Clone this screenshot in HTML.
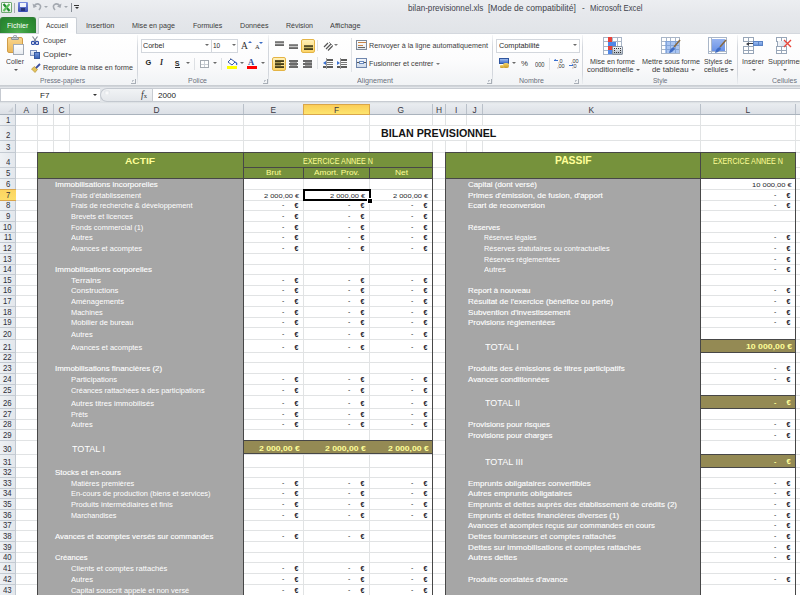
<!DOCTYPE html><html><head><meta charset="utf-8"><title>bilan-previsionnel.xls - Microsoft Excel</title><style>
html,body{margin:0;padding:0;width:800px;height:595px;overflow:hidden;background:#fff;}
body{position:relative;font-family:"Liberation Sans",sans-serif;}
body>div{position:absolute;white-space:nowrap;}svg{display:block;}
</style></head><body>
<div style="left:0px;top:0px;width:800px;height:33px;background:linear-gradient(#eceef1 0px,#e6e8ec 14px,#e1e4e8 33px);"></div>
<div style="left:1px;top:2px;width:11px;height:11px;background:linear-gradient(#ffffff,#dcebdc);border:1px solid #6fa872;box-sizing:border-box;border-radius:1px;"></div>
<div style="left:2px;top:3px;width:9px;height:9px;"><svg width="9" height="9" viewBox="0 0 9 9"><path d="M1.5 1 L7.5 8" stroke="#1f8a2e" stroke-width="2.2"/><path d="M7.5 1 L1.5 8" stroke="#5cc05c" stroke-width="2"/></svg></div>
<div style="left:14px;top:3px;width:1px;height:10px;background:#a8adb4;"></div>
<div style="left:18px;top:2px;width:10px;height:10px;background:linear-gradient(#7b8ee0,#3a4cb0);border-radius:1px;"></div>
<div style="left:20px;top:3px;width:6px;height:4px;background:#f0f3fb;"></div>
<div style="left:21px;top:8px;width:4px;height:3px;background:#28347a;"></div>
<div style="left:32px;top:2px;width:10px;height:10px;"><svg width="10" height="10" viewBox="0 0 10 10"><path d="M2 4 Q5 0.5 8 3 Q9.5 5 7 8" stroke="#a4a9b0" stroke-width="1.6" fill="none"/><path d="M0.5 1.5 L1.5 6 L5 4.5 Z" fill="#a4a9b0"/></svg></div>
<div style="left:44.0px;top:6px;width:0;height:0;border-left:2px solid transparent;border-right:2px solid transparent;border-top:2.5px solid #a4a9b0;"></div>
<div style="left:52px;top:2px;width:10px;height:10px;"><svg width="10" height="10" viewBox="0 0 10 10"><path d="M8 4 Q5 0.5 2 3 Q0.5 5 3 8" stroke="#a4a9b0" stroke-width="1.6" fill="none"/><path d="M9.5 1.5 L8.5 6 L5 4.5 Z" fill="#a4a9b0"/></svg></div>
<div style="left:64.0px;top:6px;width:0;height:0;border-left:2px solid transparent;border-right:2px solid transparent;border-top:2.5px solid #a4a9b0;"></div>
<div style="left:71px;top:3px;width:1px;height:9px;background:#8a9098;"></div>
<div style="left:74px;top:5px;width:5px;height:1px;background:#333;"></div>
<div style="left:74.5px;top:7px;width:0;height:0;border-left:2px solid transparent;border-right:2px solid transparent;border-top:2.5px solid #333;"></div>
<div style="left:407.5px;top:-0.84px;height:20px;font:8.2px 'Liberation Sans',sans-serif;line-height:20px;color:#3f434c;transform:scaleX(0.9919);transform-origin:0 0;">bilan-previsionnel.xls</div>
<div style="left:488px;top:-0.84px;height:20px;font:8.2px 'Liberation Sans',sans-serif;line-height:20px;color:#3f434c;transform:scaleX(1.0436);transform-origin:0 0;">[Mode de compatibilité]</div>
<div style="left:582px;top:-0.84px;height:20px;font:8.2px 'Liberation Sans',sans-serif;line-height:20px;color:#3f434c;">-</div>
<div style="left:590px;top:-0.84px;height:20px;font:8.2px 'Liberation Sans',sans-serif;line-height:20px;color:#3f434c;transform:scaleX(0.9444);transform-origin:0 0;">Microsoft Excel</div>
<div style="left:0px;top:17px;width:36px;height:16px;background:radial-gradient(ellipse at 50% 100%,#4fae4f 0%,#2f8f36 60%,#257f2c 100%);border-radius:3px 3px 0 0;border:1px solid #2f7f35;border-bottom:none;box-sizing:border-box;"></div>
<div style="left:7px;top:15.51px;height:20px;font:7.2px 'Liberation Sans',sans-serif;line-height:20px;color:#ffffff;transform:scaleX(0.9952);transform-origin:0 0;">Fichier</div>
<div style="left:38px;top:17px;width:39px;height:17px;background:linear-gradient(#ffffff,#fdfdfe);border:1px solid #c9ced5;border-bottom:none;border-radius:2px 2px 0 0;box-sizing:border-box;"></div>
<div style="left:46px;top:15.51px;height:20px;font:7.2px 'Liberation Sans',sans-serif;line-height:20px;color:#3c3c3c;transform:scaleX(0.9478);transform-origin:0 0;">Accueil</div>
<div style="left:85.5px;top:15.54px;height:20px;font:7.1px 'Liberation Sans',sans-serif;line-height:20px;color:#3c3c3c;transform:scaleX(1.0465);transform-origin:0 0;">Insertion</div>
<div style="left:132px;top:15.54px;height:20px;font:7.1px 'Liberation Sans',sans-serif;line-height:20px;color:#3c3c3c;transform:scaleX(1.0087);transform-origin:0 0;">Mise en page</div>
<div style="left:192.5px;top:15.54px;height:20px;font:7.1px 'Liberation Sans',sans-serif;line-height:20px;color:#3c3c3c;transform:scaleX(0.9885);transform-origin:0 0;">Formules</div>
<div style="left:239.5px;top:15.54px;height:20px;font:7.1px 'Liberation Sans',sans-serif;line-height:20px;color:#3c3c3c;transform:scaleX(1.0028);transform-origin:0 0;">Données</div>
<div style="left:285.5px;top:15.54px;height:20px;font:7.1px 'Liberation Sans',sans-serif;line-height:20px;color:#3c3c3c;transform:scaleX(0.9916);transform-origin:0 0;">Révision</div>
<div style="left:330px;top:15.54px;height:20px;font:7.1px 'Liberation Sans',sans-serif;line-height:20px;color:#3c3c3c;transform:scaleX(1.0348);transform-origin:0 0;">Affichage</div>
<div style="left:0px;top:33px;width:800px;height:52px;background:linear-gradient(#ffffff 0%,#fcfcfd 50%,#f1f3f5 100%);border-top:1px solid #d4d8de;box-sizing:border-box;"></div>
<div style="left:39px;top:33px;width:37px;height:1px;background:#fff;"></div>
<div style="left:137px;top:35px;width:1px;height:49px;background:linear-gradient(rgba(205,210,216,0.2),#d3d7dd 25%,#d3d7dd 80%,rgba(205,210,216,0.2));"></div>
<div style="left:268px;top:35px;width:1px;height:49px;background:linear-gradient(rgba(205,210,216,0.2),#d3d7dd 25%,#d3d7dd 80%,rgba(205,210,216,0.2));"></div>
<div style="left:492px;top:35px;width:1px;height:49px;background:linear-gradient(rgba(205,210,216,0.2),#d3d7dd 25%,#d3d7dd 80%,rgba(205,210,216,0.2));"></div>
<div style="left:582px;top:35px;width:1px;height:49px;background:linear-gradient(rgba(205,210,216,0.2),#d3d7dd 25%,#d3d7dd 80%,rgba(205,210,216,0.2));"></div>
<div style="left:737px;top:35px;width:1px;height:49px;background:linear-gradient(rgba(205,210,216,0.2),#d3d7dd 25%,#d3d7dd 80%,rgba(205,210,216,0.2));"></div>
<div style="left:40px;top:70.57px;height:20px;font:7.0px 'Liberation Sans',sans-serif;line-height:20px;color:#6b707c;transform:scaleX(0.9559);transform-origin:0 0;">Presse-papiers</div>
<div style="left:188px;top:70.57px;height:20px;font:7.0px 'Liberation Sans',sans-serif;line-height:20px;color:#6b707c;transform:scaleX(0.9965);transform-origin:0 0;">Police</div>
<div style="left:357px;top:70.57px;height:20px;font:7.0px 'Liberation Sans',sans-serif;line-height:20px;color:#6b707c;transform:scaleX(1.0279);transform-origin:0 0;">Alignement</div>
<div style="left:519px;top:70.57px;height:20px;font:7.0px 'Liberation Sans',sans-serif;line-height:20px;color:#6b707c;transform:scaleX(1.0041);transform-origin:0 0;">Nombre</div>
<div style="left:652.5px;top:70.57px;height:20px;font:7.0px 'Liberation Sans',sans-serif;line-height:20px;color:#6b707c;transform:scaleX(0.9317);transform-origin:0 0;">Style</div>
<div style="left:772px;top:70.57px;height:20px;font:7.0px 'Liberation Sans',sans-serif;line-height:20px;color:#6b707c;transform:scaleX(1.0040);transform-origin:0 0;">Cellules</div>
<div style="left:131px;top:79px;width:5px;height:5px;border-right:1px solid #a8aeb6;border-bottom:1px solid #a8aeb6;box-sizing:border-box;"></div>
<div style="left:132px;top:80px;width:2px;height:2px;border-left:1px solid #c0c5cc;border-top:1px solid #c0c5cc;box-sizing:border-box;"></div>
<div style="left:263px;top:79px;width:5px;height:5px;border-right:1px solid #a8aeb6;border-bottom:1px solid #a8aeb6;box-sizing:border-box;"></div>
<div style="left:264px;top:80px;width:2px;height:2px;border-left:1px solid #c0c5cc;border-top:1px solid #c0c5cc;box-sizing:border-box;"></div>
<div style="left:487px;top:79px;width:5px;height:5px;border-right:1px solid #a8aeb6;border-bottom:1px solid #a8aeb6;box-sizing:border-box;"></div>
<div style="left:488px;top:80px;width:2px;height:2px;border-left:1px solid #c0c5cc;border-top:1px solid #c0c5cc;box-sizing:border-box;"></div>
<div style="left:574px;top:79px;width:5px;height:5px;border-right:1px solid #a8aeb6;border-bottom:1px solid #a8aeb6;box-sizing:border-box;"></div>
<div style="left:575px;top:80px;width:2px;height:2px;border-left:1px solid #c0c5cc;border-top:1px solid #c0c5cc;box-sizing:border-box;"></div>
<div style="left:7px;top:37px;width:16px;height:16px;background:linear-gradient(#f8d58f,#ecb858);border:1px solid #cf9c48;border-radius:2px;box-sizing:border-box;"></div>
<div style="left:11px;top:37px;width:8px;height:3px;background:linear-gradient(#e6e9ed,#9aa1a9);border:1px solid #8a9199;box-sizing:border-box;border-radius:1px;"></div>
<div style="left:13px;top:35px;width:4px;height:3px;border:1px solid #9aa1a9;border-bottom:none;border-radius:2px 2px 0 0;box-sizing:border-box;"></div>
<div style="left:13px;top:44px;width:11px;height:11px;background:linear-gradient(#ffffff,#e7ebf0);border:1px solid #a3abb6;box-sizing:border-box;"></div>
<div style="left:6px;top:51.84px;height:20px;font:7.1px 'Liberation Sans',sans-serif;line-height:20px;color:#3c3c3c;transform:scaleX(0.9706);transform-origin:0 0;">Coller</div>
<div style="left:13.5px;top:69px;width:0;height:0;border-left:2px solid transparent;border-right:2px solid transparent;border-top:2.5px solid #5a5a5a;"></div>
<div style="left:31px;top:36px;width:8px;height:9px;"><svg width="8" height="9" viewBox="0 0 8 9"><path d="M1.5 0.5 L5.5 6" stroke="#7d8590" stroke-width="1.1"/><path d="M6.5 0.5 L2.5 6" stroke="#7d8590" stroke-width="1.1"/><circle cx="2" cy="7" r="1.6" fill="none" stroke="#2f4fa8" stroke-width="1.2"/><circle cx="6" cy="7" r="1.6" fill="none" stroke="#2f4fa8" stroke-width="1.2"/></svg></div>
<div style="left:43px;top:30.54px;height:20px;font:7.1px 'Liberation Sans',sans-serif;line-height:20px;color:#3c3c3c;transform:scaleX(0.9877);transform-origin:0 0;">Couper</div>
<div style="left:30px;top:50px;width:7px;height:6px;background:linear-gradient(#eef2f8,#c9d5ea);border:1px solid #7d93bf;box-sizing:border-box;"></div>
<div style="left:34px;top:52px;width:6px;height:7px;background:linear-gradient(#6f93d8,#3b64b8);border:1px solid #35589e;box-sizing:border-box;"></div>
<div style="left:43px;top:45.04px;height:20px;font:7.1px 'Liberation Sans',sans-serif;line-height:20px;color:#3c3c3c;transform:scaleX(1.1952);transform-origin:0 0;">Copier</div>
<div style="left:67.5px;top:53.5px;width:0;height:0;border-left:2px solid transparent;border-right:2px solid transparent;border-top:2.5px solid #6a6a6a;"></div>
<div style="left:31px;top:63px;width:10px;height:10px;"><svg width="10" height="10" viewBox="0 0 10 10"><path d="M0.5 6 L4 9.5 L6.5 6.5 L3.5 3.5 Z" fill="#e3c35c" stroke="#b08a2a" stroke-width="0.6"/><path d="M5 5 L9 1" stroke="#3c4fa0" stroke-width="1.8"/></svg></div>
<div style="left:43px;top:57.84px;height:20px;font:7.1px 'Liberation Sans',sans-serif;line-height:20px;color:#3c3c3c;transform:scaleX(1.0047);transform-origin:0 0;">Reproduire la mise en forme</div>
<div style="left:141px;top:39px;width:71px;height:14px;background:#fff;border:1px solid #d3d7dd;box-sizing:border-box;"></div>
<div style="left:211px;top:39px;width:27px;height:14px;background:#fff;border:1px solid #d3d7dd;box-sizing:border-box;"></div>
<div style="left:143.3px;top:36.47px;height:20px;font:7.3px 'Liberation Sans',sans-serif;line-height:20px;color:#2a2a2a;transform:scaleX(0.9765);transform-origin:0 0;">Corbel</div>
<div style="left:204.5px;top:44px;width:0;height:0;border-left:2px solid transparent;border-right:2px solid transparent;border-top:2.5px solid #6a6a6a;"></div>
<div style="left:212.8px;top:36.47px;height:20px;font:7.3px 'Liberation Sans',sans-serif;line-height:20px;color:#2a2a2a;transform:scaleX(0.8867);transform-origin:0 0;">10</div>
<div style="left:231.5px;top:44px;width:0;height:0;border-left:2px solid transparent;border-right:2px solid transparent;border-top:2.5px solid #6a6a6a;"></div>
<div style="left:241px;top:36.21px;height:20px;font:9.5px 'Liberation Serif',serif;line-height:20px;color:#2d2d2d;">A</div>
<div style="left:248px;top:41px;width:0;height:0;border-left:2px solid transparent;border-right:2px solid transparent;border-bottom:2px solid #3a6cc4;"></div>
<div style="left:255px;top:37.25px;height:20px;font:6.5px 'Liberation Serif',serif;line-height:20px;color:#2d2d2d;">A</div>
<div style="left:259px;top:42px;width:0;height:0;border-left:2.5px solid transparent;border-right:2.5px solid transparent;border-top:2px solid #3a6cc4;"></div>
<div style="left:145.5px;top:53.44px;height:20px;font:bold 7.4px 'Liberation Sans',sans-serif;line-height:20px;color:#1c1c1c;">G</div>
<div style="left:160px;top:53.30px;height:20px;font:italic bold 7.8px 'Liberation Serif',serif;line-height:20px;color:#2a2a2a;">I</div>
<div style="left:174.8px;top:53.51px;height:20px;font:bold 7.2px 'Liberation Sans',sans-serif;line-height:20px;color:#2a2a2a;">S</div>
<div style="left:175px;top:67px;width:5px;height:1px;background:#2a2a2a;"></div>
<div style="left:185.5px;top:62px;width:0;height:0;border-left:2px solid transparent;border-right:2px solid transparent;border-top:2.5px solid #6a6a6a;"></div>
<div style="left:194px;top:58px;width:1px;height:12px;background:#dde0e4;"></div>
<div style="left:200px;top:60px;width:9px;height:8px;border:1px solid #a3a9b0;box-sizing:border-box;background:linear-gradient(#c9ced4,#c9ced4) 50% 0/1px 100% no-repeat,linear-gradient(#c9ced4,#c9ced4) 0 50%/100% 1px no-repeat,#fff;"></div>
<div style="left:212.5px;top:62px;width:0;height:0;border-left:2px solid transparent;border-right:2px solid transparent;border-top:2.5px solid #6a6a6a;"></div>
<div style="left:221px;top:58px;width:1px;height:12px;background:#dde0e4;"></div>
<div style="left:227px;top:58px;width:11px;height:8px;"><svg width="11" height="8" viewBox="0 0 11 8"><path d="M1 4 L4 1 L8 4 L5 7 Z" fill="#fff" stroke="#3d5ca8" stroke-width="1"/><path d="M8 4 Q10.5 5 9.5 7" stroke="#2f5fc8" stroke-width="1.2" fill="none"/><path d="M3.5 0.5 L2.5 -1" stroke="#555" stroke-width="1"/></svg></div>
<div style="left:227px;top:66px;width:10px;height:3px;background:#ffff00;"></div>
<div style="left:239.5px;top:62px;width:0;height:0;border-left:2px solid transparent;border-right:2px solid transparent;border-top:2.5px solid #6a6a6a;"></div>
<div style="left:248px;top:52.35px;height:20px;font:bold 8.5px 'Liberation Serif',serif;line-height:20px;color:#2f4e96;">A</div>
<div style="left:247px;top:66px;width:10px;height:3px;background:#ff0000;"></div>
<div style="left:260.5px;top:62px;width:0;height:0;border-left:2px solid transparent;border-right:2px solid transparent;border-top:2.5px solid #6a6a6a;"></div>
<div style="left:275px;top:41px;width:9px;height:2px;background:linear-gradient(#9a9a9a,#6a6a6a);"></div>
<div style="left:275px;top:43px;width:9px;height:1px;background:#c8c8c8;"></div>
<div style="left:275px;top:44px;width:9px;height:2px;background:linear-gradient(#8a8a8a,#5a5a5a);"></div>
<div style="left:289px;top:44px;width:9px;height:2px;background:linear-gradient(#9a9a9a,#6a6a6a);"></div>
<div style="left:289px;top:46px;width:9px;height:1px;background:#c8c8c8;"></div>
<div style="left:289px;top:47px;width:9px;height:2px;background:linear-gradient(#8a8a8a,#5a5a5a);"></div>
<div style="left:301px;top:39px;width:14px;height:14px;background:linear-gradient(#fff0b8,#fbd46a);border:1px solid #e4b445;border-radius:2px;box-sizing:border-box;"></div>
<div style="left:304px;top:45px;width:9px;height:2px;background:linear-gradient(#7a7040,#4a4220);"></div>
<div style="left:304px;top:47px;width:9px;height:1px;background:#c0b060;"></div>
<div style="left:304px;top:48px;width:9px;height:2px;background:linear-gradient(#6a6030,#3a3210);"></div>
<div style="left:317px;top:40px;width:1px;height:11px;background:#dfe2e6;"></div>
<div style="left:323px;top:41px;width:14px;height:10px;"><svg width="14" height="10" viewBox="0 0 14 10"><path d="M1 6 L5 2 M3 8 L8 3 M5 9.5 L9.5 5" stroke="#555" stroke-width="1.2"/><path d="M6 1 L10 5" stroke="#777" stroke-width="0.8"/></svg></div>
<div style="left:334.0px;top:44px;width:0;height:0;border-left:2px solid transparent;border-right:2px solid transparent;border-top:2.5px solid #7a7a7a;"></div>
<div style="left:272px;top:57px;width:14px;height:14px;background:linear-gradient(#fff0b8,#fbd46a);border:1px solid #e4b445;border-radius:2px;box-sizing:border-box;"></div>
<div style="left:275px;top:60px;width:9px;height:2px;background:linear-gradient(#6a6030,#3a3210);"></div>
<div style="left:275px;top:62px;width:6px;height:1px;background:#a89850;"></div>
<div style="left:275px;top:63px;width:9px;height:2px;background:linear-gradient(#6a6030,#3a3210);"></div>
<div style="left:275px;top:65px;width:6px;height:1px;background:#a89850;"></div>
<div style="left:275px;top:66px;width:9px;height:2px;background:linear-gradient(#6a6030,#3a3210);"></div>
<div style="left:289px;top:60px;width:9px;height:2px;background:#6a6a6a;"></div>
<div style="left:290px;top:62px;width:7px;height:1px;background:#9a9a9a;"></div>
<div style="left:289px;top:63px;width:9px;height:2px;background:#6a6a6a;"></div>
<div style="left:290px;top:65px;width:7px;height:1px;background:#9a9a9a;"></div>
<div style="left:289px;top:66px;width:9px;height:2px;background:#6a6a6a;"></div>
<div style="left:303px;top:60px;width:9px;height:2px;background:#6a6a6a;"></div>
<div style="left:305px;top:62px;width:7px;height:1px;background:#9a9a9a;"></div>
<div style="left:303px;top:63px;width:9px;height:2px;background:#6a6a6a;"></div>
<div style="left:305px;top:65px;width:7px;height:1px;background:#9a9a9a;"></div>
<div style="left:303px;top:66px;width:9px;height:2px;background:#6a6a6a;"></div>
<div style="left:317px;top:57px;width:1px;height:12px;background:#dfe2e6;"></div>
<div style="left:327px;top:59px;width:6px;height:2px;background:#5a5a5a;"></div>
<div style="left:327px;top:62px;width:6px;height:1px;background:#777;"></div>
<div style="left:327px;top:64px;width:6px;height:1px;background:#777;"></div>
<div style="left:323px;top:66px;width:10px;height:2px;background:#5a5a5a;"></div>
<div style="left:326px;top:58px;width:1px;height:11px;background:#9a9a9a;"></div>
<div style="left:323px;top:61px;width:0;height:0;border-top:2px solid transparent;border-bottom:2px solid transparent;border-right:3px solid #3a70d0;"></div>
<div style="left:341px;top:59px;width:6px;height:2px;background:#5a5a5a;"></div>
<div style="left:341px;top:62px;width:6px;height:1px;background:#777;"></div>
<div style="left:341px;top:64px;width:6px;height:1px;background:#777;"></div>
<div style="left:337px;top:66px;width:10px;height:2px;background:#5a5a5a;"></div>
<div style="left:340px;top:58px;width:1px;height:11px;background:#9a9a9a;"></div>
<div style="left:337px;top:61px;width:0;height:0;border-top:2px solid transparent;border-bottom:2px solid transparent;border-left:3px solid #3a70d0;"></div>
<div style="left:351px;top:38px;width:1px;height:34px;background:#dfe2e6;"></div>
<div style="left:356px;top:40px;width:11px;height:10px;border:1px solid #7f8a99;background:linear-gradient(#ffffff,#e3e8ee);box-sizing:border-box;"></div>
<div style="left:358px;top:42px;width:8px;height:1px;background:#c8864a;"></div>
<div style="left:358px;top:45px;width:5px;height:1px;background:#c8864a;"></div>
<div style="left:358px;top:47px;width:7px;height:1px;background:#666;"></div>
<div style="left:368.6px;top:35.94px;height:20px;font:7.1px 'Liberation Sans',sans-serif;line-height:20px;color:#3c3c3c;transform:scaleX(1.0118);transform-origin:0 0;">Renvoyer à la ligne automatiquement</div>
<div style="left:356px;top:58px;width:11px;height:10px;border:1px solid #6f86ad;background:linear-gradient(#f4f7fb,#cfdaea);box-sizing:border-box;"></div>
<div style="left:357px;top:62px;width:9px;height:1px;background:#555;"></div>
<div style="left:359px;top:61px;width:5px;height:3px;background:#fff;border:1px solid #6a8ac0;box-sizing:border-box;"></div>
<div style="left:368.6px;top:53.54px;height:20px;font:7.1px 'Liberation Sans',sans-serif;line-height:20px;color:#3c3c3c;transform:scaleX(1.0151);transform-origin:0 0;">Fusionner et centrer</div>
<div style="left:435.5px;top:63px;width:0;height:0;border-left:2px solid transparent;border-right:2px solid transparent;border-top:2.5px solid #7a7a7a;"></div>
<div style="left:496px;top:39px;width:84px;height:14px;background:#fff;border:1px solid #d3d7dd;box-sizing:border-box;"></div>
<div style="left:498.5px;top:36.22px;height:20px;font:7.3px 'Liberation Sans',sans-serif;line-height:20px;color:#2a2a2a;transform:scaleX(0.9981);transform-origin:0 0;">Comptabilité</div>
<div style="left:573.0px;top:44px;width:0;height:0;border-left:2px solid transparent;border-right:2px solid transparent;border-top:2.5px solid #6a6a6a;"></div>
<div style="left:499px;top:58px;width:10px;height:6px;background:linear-gradient(#9fbcec,#3d6ccc);border:1px solid #2f559e;box-sizing:border-box;"></div>
<div style="left:503px;top:63px;width:6px;height:5px;background:linear-gradient(#f5d56a,#c99a26);border-radius:2px;"></div>
<div style="left:500px;top:65px;width:4px;height:3px;background:linear-gradient(#f5d56a,#c99a26);border-radius:1px;"></div>
<div style="left:511.5px;top:62px;width:0;height:0;border-left:2px solid transparent;border-right:2px solid transparent;border-top:2.5px solid #6a6a6a;"></div>
<div style="left:521px;top:54.23px;height:20px;font:8px 'Liberation Sans',sans-serif;line-height:20px;color:#333;transform:scaleX(0.9841);transform-origin:0 0;">%</div>
<div style="left:534.75px;top:54.51px;height:20px;font:7.2px 'Liberation Sans',sans-serif;line-height:20px;color:#333;transform:scaleX(0.7908);transform-origin:0 0;">000</div>
<div style="left:549px;top:58px;width:1px;height:12px;background:#dfe2e6;"></div>
<div style="left:558px;top:51.09px;height:20px;font:5.5px 'Liberation Sans',sans-serif;line-height:20px;color:#333;">,0</div>
<div style="left:557px;top:56.09px;height:20px;font:5.5px 'Liberation Sans',sans-serif;line-height:20px;color:#333;">,00</div>
<div style="left:554px;top:60px;width:4px;height:1px;background:#3a70d0;"></div>
<div style="left:554px;top:59px;width:0;height:0;border-top:1.5px solid transparent;border-bottom:1.5px solid transparent;border-right:2px solid #3a70d0;"></div>
<div style="left:571px;top:51.09px;height:20px;font:5.5px 'Liberation Sans',sans-serif;line-height:20px;color:#333;">,00</div>
<div style="left:572px;top:56.09px;height:20px;font:5.5px 'Liberation Sans',sans-serif;line-height:20px;color:#333;">,0</div>
<div style="left:569px;top:65px;width:4px;height:1px;background:#3a70d0;"></div>
<div style="left:572px;top:64px;width:0;height:0;border-top:1.5px solid transparent;border-bottom:1.5px solid transparent;border-left:2px solid #3a70d0;"></div>
<div style="left:603.0px;top:37.0px;width:5.5px;height:5.25px;border:1px solid #a9b6c8;box-sizing:border-box;background:#fff;"></div>
<div style="left:607.5px;top:37.0px;width:5.5px;height:5.25px;border:1px solid #a9b6c8;box-sizing:border-box;background:#fff;"></div>
<div style="left:612.0px;top:37.0px;width:5.5px;height:5.25px;border:1px solid #a9b6c8;box-sizing:border-box;background:#fff;"></div>
<div style="left:616.5px;top:37.0px;width:5.5px;height:5.25px;border:1px solid #a9b6c8;box-sizing:border-box;background:#fff;"></div>
<div style="left:603.0px;top:41.25px;width:5.5px;height:5.25px;border:1px solid #a9b6c8;box-sizing:border-box;background:#fff;"></div>
<div style="left:607.5px;top:41.25px;width:5.5px;height:5.25px;border:1px solid #a9b6c8;box-sizing:border-box;background:#fff;"></div>
<div style="left:612.0px;top:41.25px;width:5.5px;height:5.25px;border:1px solid #a9b6c8;box-sizing:border-box;background:#fff;"></div>
<div style="left:616.5px;top:41.25px;width:5.5px;height:5.25px;border:1px solid #a9b6c8;box-sizing:border-box;background:#fff;"></div>
<div style="left:603.0px;top:45.5px;width:5.5px;height:5.25px;border:1px solid #a9b6c8;box-sizing:border-box;background:#fff;"></div>
<div style="left:607.5px;top:45.5px;width:5.5px;height:5.25px;border:1px solid #a9b6c8;box-sizing:border-box;background:#fff;"></div>
<div style="left:612.0px;top:45.5px;width:5.5px;height:5.25px;border:1px solid #a9b6c8;box-sizing:border-box;background:#fff;"></div>
<div style="left:616.5px;top:45.5px;width:5.5px;height:5.25px;border:1px solid #a9b6c8;box-sizing:border-box;background:#fff;"></div>
<div style="left:603.0px;top:49.75px;width:5.5px;height:5.25px;border:1px solid #a9b6c8;box-sizing:border-box;background:#fff;"></div>
<div style="left:607.5px;top:49.75px;width:5.5px;height:5.25px;border:1px solid #a9b6c8;box-sizing:border-box;background:#fff;"></div>
<div style="left:612.0px;top:49.75px;width:5.5px;height:5.25px;border:1px solid #a9b6c8;box-sizing:border-box;background:#fff;"></div>
<div style="left:616.5px;top:49.75px;width:5.5px;height:5.25px;border:1px solid #a9b6c8;box-sizing:border-box;background:#fff;"></div>
<div style="left:608px;top:37px;width:4px;height:5px;background:#e8413a;"></div>
<div style="left:608px;top:42px;width:8px;height:4px;background:#4f86e8;"></div>
<div style="left:608px;top:46px;width:9px;height:4px;background:#e8413a;"></div>
<div style="left:608px;top:50px;width:4px;height:4px;background:#4f86e8;"></div>
<div style="left:612px;top:46px;width:11px;height:9px;background:linear-gradient(#f4f6f9,#aab3bf);border:1px solid #8a95a3;box-sizing:border-box;border-radius:1px;"></div>
<div style="left:614px;top:48px;width:7px;height:5px;border:1px dotted #333;box-sizing:border-box;"></div>
<div style="left:590px;top:52.14px;height:20px;font:7.1px 'Liberation Sans',sans-serif;line-height:20px;color:#3c3c3c;transform:scaleX(1.0004);transform-origin:0 0;">Mise en forme</div>
<div style="left:587px;top:60.34px;height:20px;font:7.1px 'Liberation Sans',sans-serif;line-height:20px;color:#3c3c3c;transform:scaleX(1.0709);transform-origin:0 0;">conditionnelle</div>
<div style="left:635.5px;top:68.5px;width:0;height:0;border-left:2px solid transparent;border-right:2px solid transparent;border-top:2.5px solid #6a6a6a;"></div>
<div style="left:661.0px;top:37px;width:5.5px;height:5px;border:1px solid #a9b6c8;box-sizing:border-box;background:#fff;"></div>
<div style="left:665.5px;top:37px;width:5.5px;height:5px;border:1px solid #a9b6c8;box-sizing:border-box;background:#fff;"></div>
<div style="left:670.0px;top:37px;width:5.5px;height:5px;border:1px solid #a9b6c8;box-sizing:border-box;background:#fff;"></div>
<div style="left:674.5px;top:37px;width:5.5px;height:5px;border:1px solid #a9b6c8;box-sizing:border-box;background:#fff;"></div>
<div style="left:661.0px;top:41px;width:5.5px;height:5px;border:1px solid #a9b6c8;box-sizing:border-box;background:#fff;"></div>
<div style="left:665.5px;top:41px;width:5.5px;height:5px;border:1px solid #a9b6c8;box-sizing:border-box;background:#fff;"></div>
<div style="left:670.0px;top:41px;width:5.5px;height:5px;border:1px solid #a9b6c8;box-sizing:border-box;background:#fff;"></div>
<div style="left:674.5px;top:41px;width:5.5px;height:5px;border:1px solid #a9b6c8;box-sizing:border-box;background:#fff;"></div>
<div style="left:661.0px;top:45px;width:5.5px;height:5px;border:1px solid #a9b6c8;box-sizing:border-box;background:#fff;"></div>
<div style="left:665.5px;top:45px;width:5.5px;height:5px;border:1px solid #a9b6c8;box-sizing:border-box;background:#fff;"></div>
<div style="left:670.0px;top:45px;width:5.5px;height:5px;border:1px solid #a9b6c8;box-sizing:border-box;background:#fff;"></div>
<div style="left:674.5px;top:45px;width:5.5px;height:5px;border:1px solid #a9b6c8;box-sizing:border-box;background:#fff;"></div>
<div style="left:661.0px;top:49px;width:5.5px;height:5px;border:1px solid #a9b6c8;box-sizing:border-box;background:#fff;"></div>
<div style="left:665.5px;top:49px;width:5.5px;height:5px;border:1px solid #a9b6c8;box-sizing:border-box;background:#fff;"></div>
<div style="left:670.0px;top:49px;width:5.5px;height:5px;border:1px solid #a9b6c8;box-sizing:border-box;background:#fff;"></div>
<div style="left:674.5px;top:49px;width:5.5px;height:5px;border:1px solid #a9b6c8;box-sizing:border-box;background:#fff;"></div>
<div style="left:665px;top:41px;width:14px;height:12px;background:rgba(100,150,230,.55);"></div>
<div style="left:668px;top:39px;width:13px;height:15px;"><svg width="13" height="15" viewBox="0 0 13 15"><path d="M12 1 L6 8" stroke="#8a6a40" stroke-width="1.6"/><path d="M6 8 Q2 9 1 14 Q5 13 7 10 Z" fill="#3f6cc4"/></svg></div>
<div style="left:642px;top:52.14px;height:20px;font:7.1px 'Liberation Sans',sans-serif;line-height:20px;color:#3c3c3c;transform:scaleX(1.0137);transform-origin:0 0;">Mettre sous forme</div>
<div style="left:652px;top:60.34px;height:20px;font:7.1px 'Liberation Sans',sans-serif;line-height:20px;color:#3c3c3c;transform:scaleX(1.1006);transform-origin:0 0;">de tableau</div>
<div style="left:690.5px;top:68.5px;width:0;height:0;border-left:2px solid transparent;border-right:2px solid transparent;border-top:2.5px solid #6a6a6a;"></div>
<div style="left:708px;top:37px;width:19px;height:17px;background:#fff;border:1px solid #a9b6c8;box-sizing:border-box;"></div>
<div style="left:711px;top:39px;width:14px;height:12px;background:linear-gradient(#97b4f0,#6a92e6);"></div>
<div style="left:708px;top:51px;width:19px;height:1px;background:#a9b6c8;"></div>
<div style="left:711px;top:37px;width:1px;height:17px;background:#a9b6c8;"></div>
<div style="left:714px;top:39px;width:13px;height:15px;"><svg width="13" height="15" viewBox="0 0 13 15"><path d="M12 1 L6 8" stroke="#8a6a40" stroke-width="1.6"/><path d="M6 8 Q2 9 1 14 Q5 13 7 10 Z" fill="#3f6cc4"/></svg></div>
<div style="left:704px;top:52.14px;height:20px;font:7.1px 'Liberation Sans',sans-serif;line-height:20px;color:#3c3c3c;transform:scaleX(0.9587);transform-origin:0 0;">Styles de</div>
<div style="left:704px;top:60.34px;height:20px;font:7.1px 'Liberation Sans',sans-serif;line-height:20px;color:#3c3c3c;transform:scaleX(1.0136);transform-origin:0 0;">cellules</div>
<div style="left:729.5px;top:68.5px;width:0;height:0;border-left:2px solid transparent;border-right:2px solid transparent;border-top:2.5px solid #6a6a6a;"></div>
<div style="left:743px;top:37px;width:6px;height:5px;border:1px solid #98a6b8;box-sizing:border-box;background:#fff;"></div>
<div style="left:748px;top:37px;width:6px;height:5px;border:1px solid #98a6b8;box-sizing:border-box;background:#fff;"></div>
<div style="left:743px;top:46.0px;width:6px;height:4.5px;border:1px solid #98a6b8;box-sizing:border-box;background:#fff;"></div>
<div style="left:748px;top:46.0px;width:6px;height:4.5px;border:1px solid #98a6b8;box-sizing:border-box;background:#fff;"></div>
<div style="left:743px;top:49.5px;width:6px;height:4.5px;border:1px solid #98a6b8;box-sizing:border-box;background:#fff;"></div>
<div style="left:748px;top:49.5px;width:6px;height:4.5px;border:1px solid #98a6b8;box-sizing:border-box;background:#fff;"></div>
<div style="left:753px;top:41px;width:10px;height:5px;background:linear-gradient(#9dbcf0,#6a96de);border:1px solid #5a82c4;box-sizing:border-box;"></div>
<div style="left:758px;top:41px;width:1px;height:5px;background:#5a82c4;"></div>
<div style="left:748px;top:43px;width:5px;height:1px;background:#3a3f48;"></div>
<div style="left:746px;top:41.5px;width:0;height:0;border-top:2px solid transparent;border-bottom:2px solid transparent;border-right:3px solid #3a3f48;"></div>
<div style="left:742px;top:52.14px;height:20px;font:7.1px 'Liberation Sans',sans-serif;line-height:20px;color:#3c3c3c;transform:scaleX(0.9956);transform-origin:0 0;">Insérer</div>
<div style="left:751.5px;top:68.5px;width:0;height:0;border-left:2px solid transparent;border-right:2px solid transparent;border-top:2.5px solid #6a6a6a;"></div>
<div style="left:776px;top:37px;width:6px;height:5px;border:1px solid #98a6b8;box-sizing:border-box;background:#fff;"></div>
<div style="left:781px;top:37px;width:6px;height:5px;border:1px solid #98a6b8;box-sizing:border-box;background:#fff;"></div>
<div style="left:777px;top:41px;width:9px;height:5px;background:linear-gradient(90deg,#f2f5f9,#d8e0ea);border-left:1px solid #98a6b8;box-sizing:border-box;"></div>
<div style="left:776px;top:46.0px;width:6px;height:4.5px;border:1px solid #98a6b8;box-sizing:border-box;background:#fff;"></div>
<div style="left:781px;top:46.0px;width:6px;height:4.5px;border:1px solid #98a6b8;box-sizing:border-box;background:#fff;"></div>
<div style="left:776px;top:49.5px;width:6px;height:4.5px;border:1px solid #98a6b8;box-sizing:border-box;background:#fff;"></div>
<div style="left:781px;top:49.5px;width:6px;height:4.5px;border:1px solid #98a6b8;box-sizing:border-box;background:#fff;"></div>
<div style="left:783px;top:39px;width:9px;height:9px;"><svg width="9" height="9" viewBox="0 0 9 9"><path d="M1 1 L8 8 M8 1 L1 8" stroke="#e8463a" stroke-width="1.4"/></svg></div>
<div style="left:768px;top:52.14px;height:20px;font:7.1px 'Liberation Sans',sans-serif;line-height:20px;color:#3c3c3c;transform:scaleX(1.0381);transform-origin:0 0;">Supprimer</div>
<div style="left:782.5px;top:68.5px;width:0;height:0;border-left:2px solid transparent;border-right:2px solid transparent;border-top:2.5px solid #6a6a6a;"></div>
<div style="left:0px;top:85px;width:800px;height:2px;background:linear-gradient(#c6cacf,#d4d8dd);"></div>
<div style="left:0px;top:87px;width:800px;height:17px;background:linear-gradient(#e3e6ea,#e1e4e8);"></div>
<div style="left:0px;top:88px;width:1px;height:14px;background:#c6cad1;"></div>
<div style="left:1px;top:88px;width:99px;height:14px;background:#fff;border-top:1px solid #c8ccd2;border-bottom:1px solid #c8ccd2;box-sizing:border-box;"></div>
<div style="left:40px;top:85.80px;height:20px;font:7.8px 'Liberation Sans',sans-serif;line-height:20px;color:#222;transform:scaleX(1.0436);transform-origin:0 0;">F7</div>
<div style="left:92.5px;top:94px;width:0;height:0;border-left:2px solid transparent;border-right:2px solid transparent;border-top:2.5px solid #333;"></div>
<div style="left:100px;top:88px;width:53px;height:14px;background:linear-gradient(#f1f3f5,#e4e7eb);border:1px solid #c3c8cf;border-right:none;border-radius:7px 0 0 7px;box-sizing:border-box;"></div>
<div style="left:104px;top:90px;width:6px;height:5px;background:radial-gradient(circle at 50% 60%,#ffffff,#d4d9df);border-radius:50%;"></div>
<div style="left:141px;top:85.21px;height:20px;font:9.5px 'Liberation Serif',serif;line-height:20px;color:#333;"><i>f</i><span style="font-size:6.5px">x</span></div>
<div style="left:152px;top:88px;width:1px;height:14px;background:#c8ccd2;"></div>
<div style="left:153px;top:88px;width:647px;height:14px;background:#fff;border-top:1px solid #c8ccd2;border-bottom:1px solid #c8ccd2;box-sizing:border-box;"></div>
<div style="left:158px;top:85.80px;height:20px;font:7.8px 'Liberation Sans',sans-serif;line-height:20px;color:#222;transform:scaleX(1.0373);transform-origin:0 0;">2000</div>
<div style="left:0px;top:102px;width:800px;height:2px;background:linear-gradient(#d9dde2,#eceef1);"></div>
<div style="left:0px;top:104px;width:800px;height:11px;background:linear-gradient(#e9ecf0,#dce0e6);border-bottom:1px solid #aab3bd;box-sizing:border-box;"></div>
<div style="left:0px;top:115px;width:16px;height:480px;background:linear-gradient(90deg,#eef1f4,#e3e7ec);border-right:1px solid #c2c9d1;box-sizing:border-box;"></div>
<div style="left:15px;top:104px;width:1px;height:10px;background:#b3bbc5;"></div>
<div style="left:8px;top:107px;width:0;height:0;border-left:5px solid transparent;border-bottom:5px solid #cdd2d8;"></div>
<div style="left:37px;top:104px;width:1px;height:10px;background:#b9c0c9;"></div>
<div style="left:23.5px;top:99.69px;height:20px;font:8.4px 'Liberation Sans',sans-serif;line-height:20px;color:#3a3a44;">A</div>
<div style="left:53px;top:104px;width:1px;height:10px;background:#b9c0c9;"></div>
<div style="left:42.5px;top:99.69px;height:20px;font:8.4px 'Liberation Sans',sans-serif;line-height:20px;color:#3a3a44;">B</div>
<div style="left:69px;top:104px;width:1px;height:10px;background:#b9c0c9;"></div>
<div style="left:58.5px;top:99.69px;height:20px;font:8.4px 'Liberation Sans',sans-serif;line-height:20px;color:#3a3a44;">C</div>
<div style="left:243px;top:104px;width:1px;height:10px;background:#b9c0c9;"></div>
<div style="left:153.5px;top:99.69px;height:20px;font:8.4px 'Liberation Sans',sans-serif;line-height:20px;color:#3a3a44;">D</div>
<div style="left:303px;top:104px;width:1px;height:10px;background:#b9c0c9;"></div>
<div style="left:270.5px;top:99.69px;height:20px;font:8.4px 'Liberation Sans',sans-serif;line-height:20px;color:#3a3a44;">E</div>
<div style="left:369px;top:104px;width:1px;height:10px;background:#b9c0c9;"></div>
<div style="left:303px;top:104px;width:67px;height:11px;background:linear-gradient(#fbcd58,#fde56e);border:1px solid #d9a54a;box-sizing:border-box;"></div>
<div style="left:334.0px;top:99.69px;height:20px;font:8.4px 'Liberation Sans',sans-serif;line-height:20px;color:#3a3a44;">F</div>
<div style="left:432px;top:104px;width:1px;height:10px;background:#b9c0c9;"></div>
<div style="left:397.5px;top:99.69px;height:20px;font:8.4px 'Liberation Sans',sans-serif;line-height:20px;color:#3a3a44;">G</div>
<div style="left:445px;top:104px;width:1px;height:10px;background:#b9c0c9;"></div>
<div style="left:436.0px;top:99.69px;height:20px;font:8.4px 'Liberation Sans',sans-serif;line-height:20px;color:#3a3a44;">H</div>
<div style="left:466px;top:104px;width:1px;height:10px;background:#b9c0c9;"></div>
<div style="left:455.0px;top:99.69px;height:20px;font:8.4px 'Liberation Sans',sans-serif;line-height:20px;color:#3a3a44;">I</div>
<div style="left:482px;top:104px;width:1px;height:10px;background:#b9c0c9;"></div>
<div style="left:472.5px;top:99.69px;height:20px;font:8.4px 'Liberation Sans',sans-serif;line-height:20px;color:#3a3a44;">J</div>
<div style="left:700px;top:104px;width:1px;height:10px;background:#b9c0c9;"></div>
<div style="left:588.5px;top:99.69px;height:20px;font:8.4px 'Liberation Sans',sans-serif;line-height:20px;color:#3a3a44;">K</div>
<div style="left:795px;top:104px;width:1px;height:10px;background:#b9c0c9;"></div>
<div style="left:745.5px;top:99.69px;height:20px;font:8.4px 'Liberation Sans',sans-serif;line-height:20px;color:#3a3a44;">L</div>
<div style="left:37px;top:115px;width:1px;height:480px;background:#e1e3e4;"></div>
<div style="left:53px;top:115px;width:1px;height:480px;background:#e1e3e4;"></div>
<div style="left:69px;top:115px;width:1px;height:480px;background:#e1e3e4;"></div>
<div style="left:243px;top:115px;width:1px;height:480px;background:#e1e3e4;"></div>
<div style="left:303px;top:115px;width:1px;height:480px;background:#e1e3e4;"></div>
<div style="left:369px;top:115px;width:1px;height:480px;background:#e1e3e4;"></div>
<div style="left:432px;top:115px;width:1px;height:480px;background:#e1e3e4;"></div>
<div style="left:445px;top:115px;width:1px;height:480px;background:#e1e3e4;"></div>
<div style="left:466px;top:115px;width:1px;height:480px;background:#e1e3e4;"></div>
<div style="left:482px;top:115px;width:1px;height:480px;background:#e1e3e4;"></div>
<div style="left:700px;top:115px;width:1px;height:480px;background:#e1e3e4;"></div>
<div style="left:795px;top:115px;width:1px;height:480px;background:#e1e3e4;"></div>
<div style="left:16px;top:125px;width:784px;height:1px;background:#e1e3e4;"></div>
<div style="left:16px;top:140px;width:784px;height:1px;background:#e1e3e4;"></div>
<div style="left:16px;top:152px;width:784px;height:1px;background:#e1e3e4;"></div>
<div style="left:16px;top:167px;width:784px;height:1px;background:#e1e3e4;"></div>
<div style="left:16px;top:178px;width:784px;height:1px;background:#e1e3e4;"></div>
<div style="left:16px;top:189px;width:784px;height:1px;background:#e1e3e4;"></div>
<div style="left:16px;top:200px;width:784px;height:1px;background:#e1e3e4;"></div>
<div style="left:16px;top:210px;width:784px;height:1px;background:#e1e3e4;"></div>
<div style="left:16px;top:221px;width:784px;height:1px;background:#e1e3e4;"></div>
<div style="left:16px;top:232px;width:784px;height:1px;background:#e1e3e4;"></div>
<div style="left:16px;top:242px;width:784px;height:1px;background:#e1e3e4;"></div>
<div style="left:16px;top:253px;width:784px;height:1px;background:#e1e3e4;"></div>
<div style="left:16px;top:264px;width:784px;height:1px;background:#e1e3e4;"></div>
<div style="left:16px;top:274px;width:784px;height:1px;background:#e1e3e4;"></div>
<div style="left:16px;top:285px;width:784px;height:1px;background:#e1e3e4;"></div>
<div style="left:16px;top:295px;width:784px;height:1px;background:#e1e3e4;"></div>
<div style="left:16px;top:306px;width:784px;height:1px;background:#e1e3e4;"></div>
<div style="left:16px;top:317px;width:784px;height:1px;background:#e1e3e4;"></div>
<div style="left:16px;top:327px;width:784px;height:1px;background:#e1e3e4;"></div>
<div style="left:16px;top:339px;width:784px;height:1px;background:#e1e3e4;"></div>
<div style="left:16px;top:352px;width:784px;height:1px;background:#e1e3e4;"></div>
<div style="left:16px;top:362px;width:784px;height:1px;background:#e1e3e4;"></div>
<div style="left:16px;top:373px;width:784px;height:1px;background:#e1e3e4;"></div>
<div style="left:16px;top:384px;width:784px;height:1px;background:#e1e3e4;"></div>
<div style="left:16px;top:395px;width:784px;height:1px;background:#e1e3e4;"></div>
<div style="left:16px;top:408px;width:784px;height:1px;background:#e1e3e4;"></div>
<div style="left:16px;top:419px;width:784px;height:1px;background:#e1e3e4;"></div>
<div style="left:16px;top:429px;width:784px;height:1px;background:#e1e3e4;"></div>
<div style="left:16px;top:440px;width:784px;height:1px;background:#e1e3e4;"></div>
<div style="left:16px;top:454px;width:784px;height:1px;background:#e1e3e4;"></div>
<div style="left:16px;top:467px;width:784px;height:1px;background:#e1e3e4;"></div>
<div style="left:16px;top:477px;width:784px;height:1px;background:#e1e3e4;"></div>
<div style="left:16px;top:488px;width:784px;height:1px;background:#e1e3e4;"></div>
<div style="left:16px;top:498px;width:784px;height:1px;background:#e1e3e4;"></div>
<div style="left:16px;top:509px;width:784px;height:1px;background:#e1e3e4;"></div>
<div style="left:16px;top:520px;width:784px;height:1px;background:#e1e3e4;"></div>
<div style="left:16px;top:530px;width:784px;height:1px;background:#e1e3e4;"></div>
<div style="left:16px;top:541px;width:784px;height:1px;background:#e1e3e4;"></div>
<div style="left:16px;top:552px;width:784px;height:1px;background:#e1e3e4;"></div>
<div style="left:16px;top:562px;width:784px;height:1px;background:#e1e3e4;"></div>
<div style="left:16px;top:573px;width:784px;height:1px;background:#e1e3e4;"></div>
<div style="left:16px;top:584px;width:784px;height:1px;background:#e1e3e4;"></div>
<div style="left:16px;top:595px;width:784px;height:1px;background:#e1e3e4;"></div>
<div style="left:0px;top:125px;width:15px;height:1px;background:#c3cad2;"></div>
<div style="left:5.5px;top:110.29px;height:20px;font:8.4px 'Liberation Sans',sans-serif;line-height:20px;color:#30303a;transform:scaleX(0.9300);transform-origin:0 0;">1</div>
<div style="left:0px;top:140px;width:15px;height:1px;background:#c3cad2;"></div>
<div style="left:5.5px;top:125.29px;height:20px;font:8.4px 'Liberation Sans',sans-serif;line-height:20px;color:#30303a;transform:scaleX(0.9300);transform-origin:0 0;">2</div>
<div style="left:0px;top:152px;width:15px;height:1px;background:#c3cad2;"></div>
<div style="left:5.5px;top:137.29px;height:20px;font:8.4px 'Liberation Sans',sans-serif;line-height:20px;color:#30303a;transform:scaleX(0.9300);transform-origin:0 0;">3</div>
<div style="left:0px;top:167px;width:15px;height:1px;background:#c3cad2;"></div>
<div style="left:5.5px;top:152.29px;height:20px;font:8.4px 'Liberation Sans',sans-serif;line-height:20px;color:#30303a;transform:scaleX(0.9300);transform-origin:0 0;">4</div>
<div style="left:0px;top:178px;width:15px;height:1px;background:#c3cad2;"></div>
<div style="left:5.5px;top:163.29px;height:20px;font:8.4px 'Liberation Sans',sans-serif;line-height:20px;color:#30303a;transform:scaleX(0.9300);transform-origin:0 0;">5</div>
<div style="left:0px;top:189px;width:15px;height:1px;background:#c3cad2;"></div>
<div style="left:5.5px;top:174.29px;height:20px;font:8.4px 'Liberation Sans',sans-serif;line-height:20px;color:#30303a;transform:scaleX(0.9300);transform-origin:0 0;">6</div>
<div style="left:0px;top:200px;width:15px;height:1px;background:#c3cad2;"></div>
<div style="left:0px;top:189px;width:16px;height:12px;background:linear-gradient(#fcd560,#fdde6a);border-top:1px solid #d9a54a;border-bottom:1px solid #d9a54a;box-sizing:border-box;"></div>
<div style="left:5.5px;top:185.29px;height:20px;font:8.4px 'Liberation Sans',sans-serif;line-height:20px;color:#30303a;transform:scaleX(0.9300);transform-origin:0 0;">7</div>
<div style="left:0px;top:210px;width:15px;height:1px;background:#c3cad2;"></div>
<div style="left:5.5px;top:195.29px;height:20px;font:8.4px 'Liberation Sans',sans-serif;line-height:20px;color:#30303a;transform:scaleX(0.9300);transform-origin:0 0;">8</div>
<div style="left:0px;top:221px;width:15px;height:1px;background:#c3cad2;"></div>
<div style="left:5.5px;top:206.29px;height:20px;font:8.4px 'Liberation Sans',sans-serif;line-height:20px;color:#30303a;transform:scaleX(0.9300);transform-origin:0 0;">9</div>
<div style="left:0px;top:232px;width:15px;height:1px;background:#c3cad2;"></div>
<div style="left:3.0px;top:217.29px;height:20px;font:8.4px 'Liberation Sans',sans-serif;line-height:20px;color:#30303a;transform:scaleX(0.9300);transform-origin:0 0;">10</div>
<div style="left:0px;top:242px;width:15px;height:1px;background:#c3cad2;"></div>
<div style="left:3.5px;top:227.29px;height:20px;font:8.4px 'Liberation Sans',sans-serif;line-height:20px;color:#30303a;transform:scaleX(0.9300);transform-origin:0 0;">11</div>
<div style="left:0px;top:253px;width:15px;height:1px;background:#c3cad2;"></div>
<div style="left:3.0px;top:238.29px;height:20px;font:8.4px 'Liberation Sans',sans-serif;line-height:20px;color:#30303a;transform:scaleX(0.9300);transform-origin:0 0;">12</div>
<div style="left:0px;top:264px;width:15px;height:1px;background:#c3cad2;"></div>
<div style="left:3.0px;top:249.29px;height:20px;font:8.4px 'Liberation Sans',sans-serif;line-height:20px;color:#30303a;transform:scaleX(0.9300);transform-origin:0 0;">13</div>
<div style="left:0px;top:274px;width:15px;height:1px;background:#c3cad2;"></div>
<div style="left:3.0px;top:259.29px;height:20px;font:8.4px 'Liberation Sans',sans-serif;line-height:20px;color:#30303a;transform:scaleX(0.9300);transform-origin:0 0;">14</div>
<div style="left:0px;top:285px;width:15px;height:1px;background:#c3cad2;"></div>
<div style="left:3.0px;top:270.29px;height:20px;font:8.4px 'Liberation Sans',sans-serif;line-height:20px;color:#30303a;transform:scaleX(0.9300);transform-origin:0 0;">15</div>
<div style="left:0px;top:295px;width:15px;height:1px;background:#c3cad2;"></div>
<div style="left:3.0px;top:280.29px;height:20px;font:8.4px 'Liberation Sans',sans-serif;line-height:20px;color:#30303a;transform:scaleX(0.9300);transform-origin:0 0;">16</div>
<div style="left:0px;top:306px;width:15px;height:1px;background:#c3cad2;"></div>
<div style="left:3.0px;top:291.29px;height:20px;font:8.4px 'Liberation Sans',sans-serif;line-height:20px;color:#30303a;transform:scaleX(0.9300);transform-origin:0 0;">17</div>
<div style="left:0px;top:317px;width:15px;height:1px;background:#c3cad2;"></div>
<div style="left:3.0px;top:302.29px;height:20px;font:8.4px 'Liberation Sans',sans-serif;line-height:20px;color:#30303a;transform:scaleX(0.9300);transform-origin:0 0;">18</div>
<div style="left:0px;top:327px;width:15px;height:1px;background:#c3cad2;"></div>
<div style="left:3.0px;top:312.29px;height:20px;font:8.4px 'Liberation Sans',sans-serif;line-height:20px;color:#30303a;transform:scaleX(0.9300);transform-origin:0 0;">19</div>
<div style="left:0px;top:339px;width:15px;height:1px;background:#c3cad2;"></div>
<div style="left:3.0px;top:324.29px;height:20px;font:8.4px 'Liberation Sans',sans-serif;line-height:20px;color:#30303a;transform:scaleX(0.9300);transform-origin:0 0;">20</div>
<div style="left:0px;top:352px;width:15px;height:1px;background:#c3cad2;"></div>
<div style="left:3.0px;top:337.29px;height:20px;font:8.4px 'Liberation Sans',sans-serif;line-height:20px;color:#30303a;transform:scaleX(0.9300);transform-origin:0 0;">21</div>
<div style="left:0px;top:362px;width:15px;height:1px;background:#c3cad2;"></div>
<div style="left:3.0px;top:347.29px;height:20px;font:8.4px 'Liberation Sans',sans-serif;line-height:20px;color:#30303a;transform:scaleX(0.9300);transform-origin:0 0;">22</div>
<div style="left:0px;top:373px;width:15px;height:1px;background:#c3cad2;"></div>
<div style="left:3.0px;top:358.29px;height:20px;font:8.4px 'Liberation Sans',sans-serif;line-height:20px;color:#30303a;transform:scaleX(0.9300);transform-origin:0 0;">23</div>
<div style="left:0px;top:384px;width:15px;height:1px;background:#c3cad2;"></div>
<div style="left:3.0px;top:369.29px;height:20px;font:8.4px 'Liberation Sans',sans-serif;line-height:20px;color:#30303a;transform:scaleX(0.9300);transform-origin:0 0;">24</div>
<div style="left:0px;top:395px;width:15px;height:1px;background:#c3cad2;"></div>
<div style="left:3.0px;top:380.29px;height:20px;font:8.4px 'Liberation Sans',sans-serif;line-height:20px;color:#30303a;transform:scaleX(0.9300);transform-origin:0 0;">25</div>
<div style="left:0px;top:408px;width:15px;height:1px;background:#c3cad2;"></div>
<div style="left:3.0px;top:393.29px;height:20px;font:8.4px 'Liberation Sans',sans-serif;line-height:20px;color:#30303a;transform:scaleX(0.9300);transform-origin:0 0;">26</div>
<div style="left:0px;top:419px;width:15px;height:1px;background:#c3cad2;"></div>
<div style="left:3.0px;top:404.29px;height:20px;font:8.4px 'Liberation Sans',sans-serif;line-height:20px;color:#30303a;transform:scaleX(0.9300);transform-origin:0 0;">27</div>
<div style="left:0px;top:429px;width:15px;height:1px;background:#c3cad2;"></div>
<div style="left:3.0px;top:414.29px;height:20px;font:8.4px 'Liberation Sans',sans-serif;line-height:20px;color:#30303a;transform:scaleX(0.9300);transform-origin:0 0;">28</div>
<div style="left:0px;top:440px;width:15px;height:1px;background:#c3cad2;"></div>
<div style="left:3.0px;top:425.29px;height:20px;font:8.4px 'Liberation Sans',sans-serif;line-height:20px;color:#30303a;transform:scaleX(0.9300);transform-origin:0 0;">29</div>
<div style="left:0px;top:454px;width:15px;height:1px;background:#c3cad2;"></div>
<div style="left:3.0px;top:439.29px;height:20px;font:8.4px 'Liberation Sans',sans-serif;line-height:20px;color:#30303a;transform:scaleX(0.9300);transform-origin:0 0;">30</div>
<div style="left:0px;top:467px;width:15px;height:1px;background:#c3cad2;"></div>
<div style="left:3.0px;top:452.29px;height:20px;font:8.4px 'Liberation Sans',sans-serif;line-height:20px;color:#30303a;transform:scaleX(0.9300);transform-origin:0 0;">31</div>
<div style="left:0px;top:477px;width:15px;height:1px;background:#c3cad2;"></div>
<div style="left:3.0px;top:462.29px;height:20px;font:8.4px 'Liberation Sans',sans-serif;line-height:20px;color:#30303a;transform:scaleX(0.9300);transform-origin:0 0;">32</div>
<div style="left:0px;top:488px;width:15px;height:1px;background:#c3cad2;"></div>
<div style="left:3.0px;top:473.29px;height:20px;font:8.4px 'Liberation Sans',sans-serif;line-height:20px;color:#30303a;transform:scaleX(0.9300);transform-origin:0 0;">33</div>
<div style="left:0px;top:498px;width:15px;height:1px;background:#c3cad2;"></div>
<div style="left:3.0px;top:483.29px;height:20px;font:8.4px 'Liberation Sans',sans-serif;line-height:20px;color:#30303a;transform:scaleX(0.9300);transform-origin:0 0;">34</div>
<div style="left:0px;top:509px;width:15px;height:1px;background:#c3cad2;"></div>
<div style="left:3.0px;top:494.29px;height:20px;font:8.4px 'Liberation Sans',sans-serif;line-height:20px;color:#30303a;transform:scaleX(0.9300);transform-origin:0 0;">35</div>
<div style="left:0px;top:520px;width:15px;height:1px;background:#c3cad2;"></div>
<div style="left:3.0px;top:505.29px;height:20px;font:8.4px 'Liberation Sans',sans-serif;line-height:20px;color:#30303a;transform:scaleX(0.9300);transform-origin:0 0;">36</div>
<div style="left:0px;top:530px;width:15px;height:1px;background:#c3cad2;"></div>
<div style="left:3.0px;top:515.29px;height:20px;font:8.4px 'Liberation Sans',sans-serif;line-height:20px;color:#30303a;transform:scaleX(0.9300);transform-origin:0 0;">37</div>
<div style="left:0px;top:541px;width:15px;height:1px;background:#c3cad2;"></div>
<div style="left:3.0px;top:526.29px;height:20px;font:8.4px 'Liberation Sans',sans-serif;line-height:20px;color:#30303a;transform:scaleX(0.9300);transform-origin:0 0;">38</div>
<div style="left:0px;top:552px;width:15px;height:1px;background:#c3cad2;"></div>
<div style="left:3.0px;top:537.29px;height:20px;font:8.4px 'Liberation Sans',sans-serif;line-height:20px;color:#30303a;transform:scaleX(0.9300);transform-origin:0 0;">39</div>
<div style="left:0px;top:562px;width:15px;height:1px;background:#c3cad2;"></div>
<div style="left:3.0px;top:547.29px;height:20px;font:8.4px 'Liberation Sans',sans-serif;line-height:20px;color:#30303a;transform:scaleX(0.9300);transform-origin:0 0;">40</div>
<div style="left:0px;top:573px;width:15px;height:1px;background:#c3cad2;"></div>
<div style="left:3.0px;top:558.29px;height:20px;font:8.4px 'Liberation Sans',sans-serif;line-height:20px;color:#30303a;transform:scaleX(0.9300);transform-origin:0 0;">41</div>
<div style="left:0px;top:584px;width:15px;height:1px;background:#c3cad2;"></div>
<div style="left:3.0px;top:569.29px;height:20px;font:8.4px 'Liberation Sans',sans-serif;line-height:20px;color:#30303a;transform:scaleX(0.9300);transform-origin:0 0;">42</div>
<div style="left:0px;top:595px;width:15px;height:1px;background:#c3cad2;"></div>
<div style="left:3.0px;top:580.29px;height:20px;font:8.4px 'Liberation Sans',sans-serif;line-height:20px;color:#30303a;transform:scaleX(0.9300);transform-origin:0 0;">43</div>
<div style="left:371px;top:126px;width:329px;height:14px;background:#fff;"></div>
<div style="left:381.4px;top:123.97px;height:20px;font:bold 10.2px 'Liberation Sans',sans-serif;line-height:20px;color:#141414;transform:scaleX(1.0505);transform-origin:0 0;">BILAN PREVISIONNEL</div>
<div style="left:37px;top:152px;width:396px;height:27px;background:#76923c;"></div>
<div style="left:38px;top:179px;width:205px;height:416px;background:#a6a6a6;"></div>
<div style="left:37px;top:152px;width:396px;height:1px;background:#474747;"></div>
<div style="left:37px;top:152px;width:1px;height:443px;background:#474747;"></div>
<div style="left:243px;top:152px;width:1px;height:443px;background:#474747;"></div>
<div style="left:432px;top:152px;width:1px;height:443px;background:#474747;"></div>
<div style="left:244px;top:167px;width:188px;height:1px;background:#474747;"></div>
<div style="left:37px;top:178px;width:396px;height:1px;background:#474747;"></div>
<div style="left:303px;top:168px;width:1px;height:10px;background:#474747;"></div>
<div style="left:369px;top:168px;width:1px;height:10px;background:#474747;"></div>
<div style="left:125.4px;top:150.97px;height:20px;font:bold 9.6px 'Liberation Sans',sans-serif;line-height:20px;color:#ffff99;transform:scaleX(1.0615);transform-origin:0 0;">ACTIF</div>
<div style="left:303px;top:151.76px;height:20px;font:8.2px 'Liberation Sans',sans-serif;line-height:20px;color:#ffff99;transform:scaleX(0.8728);transform-origin:0 0;">EXERCICE ANNEE N</div>
<div style="left:265.8px;top:163.23px;height:20px;font:8px 'Liberation Sans',sans-serif;line-height:20px;color:#ffff99;transform:scaleX(1.0223);transform-origin:0 0;">Brut</div>
<div style="left:313.9px;top:163.23px;height:20px;font:8px 'Liberation Sans',sans-serif;line-height:20px;color:#ffff99;transform:scaleX(1.0351);transform-origin:0 0;">Amort. Prov.</div>
<div style="left:394.5px;top:163.23px;height:20px;font:8px 'Liberation Sans',sans-serif;line-height:20px;color:#ffff99;transform:scaleX(1.0442);transform-origin:0 0;">Net</div>
<div style="left:445px;top:152px;width:351px;height:27px;background:#76923c;"></div>
<div style="left:446px;top:179px;width:254px;height:416px;background:#a6a6a6;"></div>
<div style="left:445px;top:152px;width:351px;height:1px;background:#474747;"></div>
<div style="left:445px;top:152px;width:1px;height:443px;background:#474747;"></div>
<div style="left:700px;top:152px;width:1px;height:443px;background:#474747;"></div>
<div style="left:795px;top:152px;width:1px;height:443px;background:#474747;"></div>
<div style="left:445px;top:178px;width:351px;height:1px;background:#474747;"></div>
<div style="left:555.1px;top:150.84px;height:20px;font:bold 10px 'Liberation Sans',sans-serif;line-height:20px;color:#ffff99;transform:scaleX(1.0346);transform-origin:0 0;">PASSIF</div>
<div style="left:712.9px;top:151.76px;height:20px;font:8.2px 'Liberation Sans',sans-serif;line-height:20px;color:#ffff99;transform:scaleX(0.8728);transform-origin:0 0;">EXERCICE ANNEE N</div>
<div style="left:55.3px;top:175.26px;height:20px;font:7.9px 'Liberation Sans',sans-serif;line-height:20px;color:#ffffff;transform:scaleX(1.0155);transform-origin:0 0;-webkit-text-stroke:0.12px #fff;">Immobilisations incorporelles</div>
<div style="left:71.25px;top:186.40px;height:20px;font:7.5px 'Liberation Sans',sans-serif;line-height:20px;color:#ffffff;transform:scaleX(0.9925);transform-origin:0 0;">Frais d'établissement</div>
<div style="left:71.25px;top:196.40px;height:20px;font:7.5px 'Liberation Sans',sans-serif;line-height:20px;color:#ffffff;transform:scaleX(0.9879);transform-origin:0 0;">Frais de recherche &amp; développement</div>
<div style="left:71.25px;top:207.40px;height:20px;font:7.5px 'Liberation Sans',sans-serif;line-height:20px;color:#ffffff;transform:scaleX(0.9834);transform-origin:0 0;">Brevets et licences</div>
<div style="left:71.25px;top:218.40px;height:20px;font:7.5px 'Liberation Sans',sans-serif;line-height:20px;color:#ffffff;transform:scaleX(0.9970);transform-origin:0 0;">Fonds commercial (1)</div>
<div style="left:71.25px;top:228.40px;height:20px;font:7.5px 'Liberation Sans',sans-serif;line-height:20px;color:#ffffff;transform:scaleX(1.0011);transform-origin:0 0;">Autres</div>
<div style="left:71.25px;top:239.40px;height:20px;font:7.5px 'Liberation Sans',sans-serif;line-height:20px;color:#ffffff;transform:scaleX(0.9920);transform-origin:0 0;">Avances et acomptes</div>
<div style="left:55.3px;top:260.26px;height:20px;font:7.9px 'Liberation Sans',sans-serif;line-height:20px;color:#ffffff;transform:scaleX(1.0191);transform-origin:0 0;-webkit-text-stroke:0.12px #fff;">Immobilisations corporelles</div>
<div style="left:71.25px;top:271.40px;height:20px;font:7.5px 'Liberation Sans',sans-serif;line-height:20px;color:#ffffff;transform:scaleX(1.1246);transform-origin:0 0;">Terrains</div>
<div style="left:71.25px;top:281.40px;height:20px;font:7.5px 'Liberation Sans',sans-serif;line-height:20px;color:#ffffff;transform:scaleX(1.0359);transform-origin:0 0;">Constructions</div>
<div style="left:71.25px;top:292.40px;height:20px;font:7.5px 'Liberation Sans',sans-serif;line-height:20px;color:#ffffff;transform:scaleX(1.0089);transform-origin:0 0;">Aménagements</div>
<div style="left:71.25px;top:303.40px;height:20px;font:7.5px 'Liberation Sans',sans-serif;line-height:20px;color:#ffffff;transform:scaleX(0.9891);transform-origin:0 0;">Machines</div>
<div style="left:71.25px;top:313.40px;height:20px;font:7.5px 'Liberation Sans',sans-serif;line-height:20px;color:#ffffff;transform:scaleX(1.0061);transform-origin:0 0;">Mobilier de bureau</div>
<div style="left:71.25px;top:325.40px;height:20px;font:7.5px 'Liberation Sans',sans-serif;line-height:20px;color:#ffffff;transform:scaleX(1.0034);transform-origin:0 0;">Autres</div>
<div style="left:71.25px;top:338.40px;height:20px;font:7.5px 'Liberation Sans',sans-serif;line-height:20px;color:#ffffff;transform:scaleX(0.9955);transform-origin:0 0;">Avances et acomptes</div>
<div style="left:55.3px;top:359.26px;height:20px;font:7.9px 'Liberation Sans',sans-serif;line-height:20px;color:#ffffff;transform:scaleX(1.0048);transform-origin:0 0;-webkit-text-stroke:0.12px #fff;">Immobilisations financières (2)</div>
<div style="left:71.25px;top:370.40px;height:20px;font:7.5px 'Liberation Sans',sans-serif;line-height:20px;color:#ffffff;transform:scaleX(1.0261);transform-origin:0 0;">Participations</div>
<div style="left:71.25px;top:381.40px;height:20px;font:7.5px 'Liberation Sans',sans-serif;line-height:20px;color:#ffffff;transform:scaleX(0.9830);transform-origin:0 0;">Créances rattachées à des participations</div>
<div style="left:71.25px;top:394.40px;height:20px;font:7.5px 'Liberation Sans',sans-serif;line-height:20px;color:#ffffff;transform:scaleX(1.0213);transform-origin:0 0;">Autres titres immobilisés</div>
<div style="left:71.25px;top:405.40px;height:20px;font:7.5px 'Liberation Sans',sans-serif;line-height:20px;color:#ffffff;transform:scaleX(0.9711);transform-origin:0 0;">Prêts</div>
<div style="left:71.25px;top:415.40px;height:20px;font:7.5px 'Liberation Sans',sans-serif;line-height:20px;color:#ffffff;transform:scaleX(1.0011);transform-origin:0 0;">Autres</div>
<div style="left:71.8px;top:438.62px;height:20px;font:8.3px 'Liberation Sans',sans-serif;line-height:20px;color:#ffffff;transform:scaleX(1.0896);transform-origin:0 0;">TOTAL I</div>
<div style="left:55.3px;top:463.26px;height:20px;font:7.9px 'Liberation Sans',sans-serif;line-height:20px;color:#ffffff;transform:scaleX(1.0088);transform-origin:0 0;-webkit-text-stroke:0.12px #fff;">Stocks et en-cours</div>
<div style="left:71.25px;top:474.40px;height:20px;font:7.5px 'Liberation Sans',sans-serif;line-height:20px;color:#ffffff;transform:scaleX(0.9854);transform-origin:0 0;">Matières premières</div>
<div style="left:71.25px;top:484.40px;height:20px;font:7.5px 'Liberation Sans',sans-serif;line-height:20px;color:#ffffff;transform:scaleX(0.9930);transform-origin:0 0;">En-cours de production (biens et services)</div>
<div style="left:71.25px;top:495.40px;height:20px;font:7.5px 'Liberation Sans',sans-serif;line-height:20px;color:#ffffff;transform:scaleX(1.0128);transform-origin:0 0;">Produits intermédiaires et finis</div>
<div style="left:71.25px;top:506.40px;height:20px;font:7.5px 'Liberation Sans',sans-serif;line-height:20px;color:#ffffff;transform:scaleX(0.9745);transform-origin:0 0;">Marchandises</div>
<div style="left:55.3px;top:527.26px;height:20px;font:7.9px 'Liberation Sans',sans-serif;line-height:20px;color:#ffffff;transform:scaleX(0.9953);transform-origin:0 0;-webkit-text-stroke:0.12px #fff;">Avances et acomptes versés sur commandes</div>
<div style="left:55.3px;top:548.26px;height:20px;font:7.9px 'Liberation Sans',sans-serif;line-height:20px;color:#ffffff;transform:scaleX(0.9671);transform-origin:0 0;-webkit-text-stroke:0.12px #fff;">Créances</div>
<div style="left:71.25px;top:559.40px;height:20px;font:7.5px 'Liberation Sans',sans-serif;line-height:20px;color:#ffffff;transform:scaleX(1.0172);transform-origin:0 0;">Clients et comptes rattachés</div>
<div style="left:71.25px;top:570.40px;height:20px;font:7.5px 'Liberation Sans',sans-serif;line-height:20px;color:#ffffff;transform:scaleX(1.0149);transform-origin:0 0;">Autres</div>
<div style="left:71.25px;top:581.40px;height:20px;font:7.5px 'Liberation Sans',sans-serif;line-height:20px;color:#ffffff;transform:scaleX(0.9917);transform-origin:0 0;">Capital souscrit appelé et non versé</div>
<div style="left:468.25px;top:175.26px;height:20px;font:7.9px 'Liberation Sans',sans-serif;line-height:20px;color:#ffffff;transform:scaleX(1.0009);transform-origin:0 0;-webkit-text-stroke:0.12px #fff;">Capital (dont versé)</div>
<div style="left:468.25px;top:186.26px;height:20px;font:7.9px 'Liberation Sans',sans-serif;line-height:20px;color:#ffffff;transform:scaleX(1.0151);transform-origin:0 0;-webkit-text-stroke:0.12px #fff;">Primes d'émission, de fusion, d'apport</div>
<div style="left:468.25px;top:196.26px;height:20px;font:7.9px 'Liberation Sans',sans-serif;line-height:20px;color:#ffffff;transform:scaleX(1.0020);transform-origin:0 0;-webkit-text-stroke:0.12px #fff;">Ecart de reconversion</div>
<div style="left:468.25px;top:218.26px;height:20px;font:7.9px 'Liberation Sans',sans-serif;line-height:20px;color:#ffffff;transform:scaleX(0.9590);transform-origin:0 0;-webkit-text-stroke:0.12px #fff;">Réserves</div>
<div style="left:484.4px;top:228.40px;height:20px;font:7.5px 'Liberation Sans',sans-serif;line-height:20px;color:#ffffff;transform:scaleX(0.9108);transform-origin:0 0;">Réserves légales</div>
<div style="left:484.4px;top:239.40px;height:20px;font:7.5px 'Liberation Sans',sans-serif;line-height:20px;color:#ffffff;transform:scaleX(0.9886);transform-origin:0 0;">Réserves statutaires ou contractuelles</div>
<div style="left:484.4px;top:250.40px;height:20px;font:7.5px 'Liberation Sans',sans-serif;line-height:20px;color:#ffffff;transform:scaleX(0.9570);transform-origin:0 0;">Réserves réglementées</div>
<div style="left:484.4px;top:260.40px;height:20px;font:7.5px 'Liberation Sans',sans-serif;line-height:20px;color:#ffffff;transform:scaleX(1.0057);transform-origin:0 0;">Autres</div>
<div style="left:468.25px;top:281.26px;height:20px;font:7.9px 'Liberation Sans',sans-serif;line-height:20px;color:#ffffff;transform:scaleX(0.9951);transform-origin:0 0;-webkit-text-stroke:0.12px #fff;">Report à nouveau</div>
<div style="left:468.25px;top:292.26px;height:20px;font:7.9px 'Liberation Sans',sans-serif;line-height:20px;color:#ffffff;transform:scaleX(1.0136);transform-origin:0 0;-webkit-text-stroke:0.12px #fff;">Résultat de l'exercice (bénéfice ou perte)</div>
<div style="left:468.25px;top:303.26px;height:20px;font:7.9px 'Liberation Sans',sans-serif;line-height:20px;color:#ffffff;transform:scaleX(1.0262);transform-origin:0 0;-webkit-text-stroke:0.12px #fff;">Subvention d'investissement</div>
<div style="left:468.25px;top:313.26px;height:20px;font:7.9px 'Liberation Sans',sans-serif;line-height:20px;color:#ffffff;transform:scaleX(1.0080);transform-origin:0 0;-webkit-text-stroke:0.12px #fff;">Provisions règlementées</div>
<div style="left:485px;top:336.62px;height:20px;font:8.3px 'Liberation Sans',sans-serif;line-height:20px;color:#ffffff;transform:scaleX(1.1144);transform-origin:0 0;">TOTAL I</div>
<div style="left:468.25px;top:359.26px;height:20px;font:7.9px 'Liberation Sans',sans-serif;line-height:20px;color:#ffffff;transform:scaleX(1.0216);transform-origin:0 0;-webkit-text-stroke:0.12px #fff;">Produits des émissions de titres participatifs</div>
<div style="left:468.25px;top:370.26px;height:20px;font:7.9px 'Liberation Sans',sans-serif;line-height:20px;color:#ffffff;transform:scaleX(1.0036);transform-origin:0 0;-webkit-text-stroke:0.12px #fff;">Avances conditionnées</div>
<div style="left:485px;top:392.62px;height:20px;font:8.3px 'Liberation Sans',sans-serif;line-height:20px;color:#ffffff;transform:scaleX(1.0739);transform-origin:0 0;">TOTAL II</div>
<div style="left:468.25px;top:415.26px;height:20px;font:7.9px 'Liberation Sans',sans-serif;line-height:20px;color:#ffffff;transform:scaleX(0.9986);transform-origin:0 0;-webkit-text-stroke:0.12px #fff;">Provisions pour risques</div>
<div style="left:468.25px;top:426.26px;height:20px;font:7.9px 'Liberation Sans',sans-serif;line-height:20px;color:#ffffff;transform:scaleX(0.9970);transform-origin:0 0;-webkit-text-stroke:0.12px #fff;">Provisions pour charges</div>
<div style="left:485px;top:451.62px;height:20px;font:8.3px 'Liberation Sans',sans-serif;line-height:20px;color:#ffffff;transform:scaleX(1.0889);transform-origin:0 0;">TOTAL III</div>
<div style="left:468.25px;top:474.26px;height:20px;font:7.9px 'Liberation Sans',sans-serif;line-height:20px;color:#ffffff;transform:scaleX(1.0186);transform-origin:0 0;-webkit-text-stroke:0.12px #fff;">Emprunts obligataires convertibles</div>
<div style="left:468.25px;top:484.26px;height:20px;font:7.9px 'Liberation Sans',sans-serif;line-height:20px;color:#ffffff;transform:scaleX(1.0367);transform-origin:0 0;-webkit-text-stroke:0.12px #fff;">Autres emprunts obligataires</div>
<div style="left:468.25px;top:495.26px;height:20px;font:7.9px 'Liberation Sans',sans-serif;line-height:20px;color:#ffffff;transform:scaleX(1.0117);transform-origin:0 0;-webkit-text-stroke:0.12px #fff;">Emprunts et dettes auprès des établissement de crédits (2)</div>
<div style="left:468.25px;top:506.26px;height:20px;font:7.9px 'Liberation Sans',sans-serif;line-height:20px;color:#ffffff;transform:scaleX(1.0072);transform-origin:0 0;-webkit-text-stroke:0.12px #fff;">Emprunts et dettes financières diverses (1)</div>
<div style="left:468.25px;top:516.26px;height:20px;font:7.9px 'Liberation Sans',sans-serif;line-height:20px;color:#ffffff;transform:scaleX(0.9971);transform-origin:0 0;-webkit-text-stroke:0.12px #fff;">Avances et acomptes reçus sur commandes en cours</div>
<div style="left:468.25px;top:527.26px;height:20px;font:7.9px 'Liberation Sans',sans-serif;line-height:20px;color:#ffffff;transform:scaleX(1.0308);transform-origin:0 0;-webkit-text-stroke:0.12px #fff;">Dettes fournisseurs et comptes rattachés</div>
<div style="left:468.25px;top:538.26px;height:20px;font:7.9px 'Liberation Sans',sans-serif;line-height:20px;color:#ffffff;transform:scaleX(1.0315);transform-origin:0 0;-webkit-text-stroke:0.12px #fff;">Dettes sur immobilisations et comptes rattachés</div>
<div style="left:468.25px;top:548.26px;height:20px;font:7.9px 'Liberation Sans',sans-serif;line-height:20px;color:#ffffff;transform:scaleX(1.0580);transform-origin:0 0;-webkit-text-stroke:0.12px #fff;">Autres dettes</div>
<div style="left:468.25px;top:570.26px;height:20px;font:7.9px 'Liberation Sans',sans-serif;line-height:20px;color:#ffffff;transform:scaleX(1.0120);transform-origin:0 0;-webkit-text-stroke:0.12px #fff;">Produits constatés d'avance</div>
<div style="left:264.0px;top:186.29px;height:20px;font:6.1px 'Liberation Sans',sans-serif;line-height:20px;color:#1f1f2e;transform:scaleX(1.2226);transform-origin:0 0;">2 000,00 €</div>
<div style="left:330.0px;top:186.29px;height:20px;font:6.1px 'Liberation Sans',sans-serif;line-height:20px;color:#1f1f2e;transform:scaleX(1.2226);transform-origin:0 0;">2 000,00 €</div>
<div style="left:393.0px;top:186.29px;height:20px;font:6.1px 'Liberation Sans',sans-serif;line-height:20px;color:#1f1f2e;transform:scaleX(1.2226);transform-origin:0 0;">2 000,00 €</div>
<div style="left:282px;top:195.47px;height:20px;font:7px 'Liberation Sans',sans-serif;line-height:20px;color:#1f1f2e;">-</div>
<div style="left:294.5px;top:195.97px;height:20px;font:bold 7px 'Liberation Sans',sans-serif;line-height:20px;color:#1f1f2e;">€</div>
<div style="left:348px;top:195.47px;height:20px;font:7px 'Liberation Sans',sans-serif;line-height:20px;color:#1f1f2e;">-</div>
<div style="left:360.5px;top:195.97px;height:20px;font:bold 7px 'Liberation Sans',sans-serif;line-height:20px;color:#1f1f2e;">€</div>
<div style="left:411px;top:195.47px;height:20px;font:7px 'Liberation Sans',sans-serif;line-height:20px;color:#1f1f2e;">-</div>
<div style="left:423.5px;top:195.97px;height:20px;font:bold 7px 'Liberation Sans',sans-serif;line-height:20px;color:#1f1f2e;">€</div>
<div style="left:282px;top:206.47px;height:20px;font:7px 'Liberation Sans',sans-serif;line-height:20px;color:#1f1f2e;">-</div>
<div style="left:294.5px;top:206.97px;height:20px;font:bold 7px 'Liberation Sans',sans-serif;line-height:20px;color:#1f1f2e;">€</div>
<div style="left:348px;top:206.47px;height:20px;font:7px 'Liberation Sans',sans-serif;line-height:20px;color:#1f1f2e;">-</div>
<div style="left:360.5px;top:206.97px;height:20px;font:bold 7px 'Liberation Sans',sans-serif;line-height:20px;color:#1f1f2e;">€</div>
<div style="left:411px;top:206.47px;height:20px;font:7px 'Liberation Sans',sans-serif;line-height:20px;color:#1f1f2e;">-</div>
<div style="left:423.5px;top:206.97px;height:20px;font:bold 7px 'Liberation Sans',sans-serif;line-height:20px;color:#1f1f2e;">€</div>
<div style="left:282px;top:217.47px;height:20px;font:7px 'Liberation Sans',sans-serif;line-height:20px;color:#1f1f2e;">-</div>
<div style="left:294.5px;top:217.97px;height:20px;font:bold 7px 'Liberation Sans',sans-serif;line-height:20px;color:#1f1f2e;">€</div>
<div style="left:348px;top:217.47px;height:20px;font:7px 'Liberation Sans',sans-serif;line-height:20px;color:#1f1f2e;">-</div>
<div style="left:360.5px;top:217.97px;height:20px;font:bold 7px 'Liberation Sans',sans-serif;line-height:20px;color:#1f1f2e;">€</div>
<div style="left:411px;top:217.47px;height:20px;font:7px 'Liberation Sans',sans-serif;line-height:20px;color:#1f1f2e;">-</div>
<div style="left:423.5px;top:217.97px;height:20px;font:bold 7px 'Liberation Sans',sans-serif;line-height:20px;color:#1f1f2e;">€</div>
<div style="left:282px;top:227.47px;height:20px;font:7px 'Liberation Sans',sans-serif;line-height:20px;color:#1f1f2e;">-</div>
<div style="left:294.5px;top:227.97px;height:20px;font:bold 7px 'Liberation Sans',sans-serif;line-height:20px;color:#1f1f2e;">€</div>
<div style="left:348px;top:227.47px;height:20px;font:7px 'Liberation Sans',sans-serif;line-height:20px;color:#1f1f2e;">-</div>
<div style="left:360.5px;top:227.97px;height:20px;font:bold 7px 'Liberation Sans',sans-serif;line-height:20px;color:#1f1f2e;">€</div>
<div style="left:411px;top:227.47px;height:20px;font:7px 'Liberation Sans',sans-serif;line-height:20px;color:#1f1f2e;">-</div>
<div style="left:423.5px;top:227.97px;height:20px;font:bold 7px 'Liberation Sans',sans-serif;line-height:20px;color:#1f1f2e;">€</div>
<div style="left:282px;top:238.47px;height:20px;font:7px 'Liberation Sans',sans-serif;line-height:20px;color:#1f1f2e;">-</div>
<div style="left:294.5px;top:238.97px;height:20px;font:bold 7px 'Liberation Sans',sans-serif;line-height:20px;color:#1f1f2e;">€</div>
<div style="left:348px;top:238.47px;height:20px;font:7px 'Liberation Sans',sans-serif;line-height:20px;color:#1f1f2e;">-</div>
<div style="left:360.5px;top:238.97px;height:20px;font:bold 7px 'Liberation Sans',sans-serif;line-height:20px;color:#1f1f2e;">€</div>
<div style="left:411px;top:238.47px;height:20px;font:7px 'Liberation Sans',sans-serif;line-height:20px;color:#1f1f2e;">-</div>
<div style="left:423.5px;top:238.97px;height:20px;font:bold 7px 'Liberation Sans',sans-serif;line-height:20px;color:#1f1f2e;">€</div>
<div style="left:282px;top:270.47px;height:20px;font:7px 'Liberation Sans',sans-serif;line-height:20px;color:#1f1f2e;">-</div>
<div style="left:294.5px;top:270.97px;height:20px;font:bold 7px 'Liberation Sans',sans-serif;line-height:20px;color:#1f1f2e;">€</div>
<div style="left:348px;top:270.47px;height:20px;font:7px 'Liberation Sans',sans-serif;line-height:20px;color:#1f1f2e;">-</div>
<div style="left:360.5px;top:270.97px;height:20px;font:bold 7px 'Liberation Sans',sans-serif;line-height:20px;color:#1f1f2e;">€</div>
<div style="left:411px;top:270.47px;height:20px;font:7px 'Liberation Sans',sans-serif;line-height:20px;color:#1f1f2e;">-</div>
<div style="left:423.5px;top:270.97px;height:20px;font:bold 7px 'Liberation Sans',sans-serif;line-height:20px;color:#1f1f2e;">€</div>
<div style="left:282px;top:280.47px;height:20px;font:7px 'Liberation Sans',sans-serif;line-height:20px;color:#1f1f2e;">-</div>
<div style="left:294.5px;top:280.97px;height:20px;font:bold 7px 'Liberation Sans',sans-serif;line-height:20px;color:#1f1f2e;">€</div>
<div style="left:348px;top:280.47px;height:20px;font:7px 'Liberation Sans',sans-serif;line-height:20px;color:#1f1f2e;">-</div>
<div style="left:360.5px;top:280.97px;height:20px;font:bold 7px 'Liberation Sans',sans-serif;line-height:20px;color:#1f1f2e;">€</div>
<div style="left:411px;top:280.47px;height:20px;font:7px 'Liberation Sans',sans-serif;line-height:20px;color:#1f1f2e;">-</div>
<div style="left:423.5px;top:280.97px;height:20px;font:bold 7px 'Liberation Sans',sans-serif;line-height:20px;color:#1f1f2e;">€</div>
<div style="left:282px;top:291.47px;height:20px;font:7px 'Liberation Sans',sans-serif;line-height:20px;color:#1f1f2e;">-</div>
<div style="left:294.5px;top:291.97px;height:20px;font:bold 7px 'Liberation Sans',sans-serif;line-height:20px;color:#1f1f2e;">€</div>
<div style="left:348px;top:291.47px;height:20px;font:7px 'Liberation Sans',sans-serif;line-height:20px;color:#1f1f2e;">-</div>
<div style="left:360.5px;top:291.97px;height:20px;font:bold 7px 'Liberation Sans',sans-serif;line-height:20px;color:#1f1f2e;">€</div>
<div style="left:411px;top:291.47px;height:20px;font:7px 'Liberation Sans',sans-serif;line-height:20px;color:#1f1f2e;">-</div>
<div style="left:423.5px;top:291.97px;height:20px;font:bold 7px 'Liberation Sans',sans-serif;line-height:20px;color:#1f1f2e;">€</div>
<div style="left:282px;top:302.47px;height:20px;font:7px 'Liberation Sans',sans-serif;line-height:20px;color:#1f1f2e;">-</div>
<div style="left:294.5px;top:302.97px;height:20px;font:bold 7px 'Liberation Sans',sans-serif;line-height:20px;color:#1f1f2e;">€</div>
<div style="left:348px;top:302.47px;height:20px;font:7px 'Liberation Sans',sans-serif;line-height:20px;color:#1f1f2e;">-</div>
<div style="left:360.5px;top:302.97px;height:20px;font:bold 7px 'Liberation Sans',sans-serif;line-height:20px;color:#1f1f2e;">€</div>
<div style="left:411px;top:302.47px;height:20px;font:7px 'Liberation Sans',sans-serif;line-height:20px;color:#1f1f2e;">-</div>
<div style="left:423.5px;top:302.97px;height:20px;font:bold 7px 'Liberation Sans',sans-serif;line-height:20px;color:#1f1f2e;">€</div>
<div style="left:282px;top:312.47px;height:20px;font:7px 'Liberation Sans',sans-serif;line-height:20px;color:#1f1f2e;">-</div>
<div style="left:294.5px;top:312.97px;height:20px;font:bold 7px 'Liberation Sans',sans-serif;line-height:20px;color:#1f1f2e;">€</div>
<div style="left:348px;top:312.47px;height:20px;font:7px 'Liberation Sans',sans-serif;line-height:20px;color:#1f1f2e;">-</div>
<div style="left:360.5px;top:312.97px;height:20px;font:bold 7px 'Liberation Sans',sans-serif;line-height:20px;color:#1f1f2e;">€</div>
<div style="left:411px;top:312.47px;height:20px;font:7px 'Liberation Sans',sans-serif;line-height:20px;color:#1f1f2e;">-</div>
<div style="left:423.5px;top:312.97px;height:20px;font:bold 7px 'Liberation Sans',sans-serif;line-height:20px;color:#1f1f2e;">€</div>
<div style="left:282px;top:324.47px;height:20px;font:7px 'Liberation Sans',sans-serif;line-height:20px;color:#1f1f2e;">-</div>
<div style="left:294.5px;top:324.97px;height:20px;font:bold 7px 'Liberation Sans',sans-serif;line-height:20px;color:#1f1f2e;">€</div>
<div style="left:348px;top:324.47px;height:20px;font:7px 'Liberation Sans',sans-serif;line-height:20px;color:#1f1f2e;">-</div>
<div style="left:360.5px;top:324.97px;height:20px;font:bold 7px 'Liberation Sans',sans-serif;line-height:20px;color:#1f1f2e;">€</div>
<div style="left:411px;top:324.47px;height:20px;font:7px 'Liberation Sans',sans-serif;line-height:20px;color:#1f1f2e;">-</div>
<div style="left:423.5px;top:324.97px;height:20px;font:bold 7px 'Liberation Sans',sans-serif;line-height:20px;color:#1f1f2e;">€</div>
<div style="left:282px;top:337.47px;height:20px;font:7px 'Liberation Sans',sans-serif;line-height:20px;color:#1f1f2e;">-</div>
<div style="left:294.5px;top:337.97px;height:20px;font:bold 7px 'Liberation Sans',sans-serif;line-height:20px;color:#1f1f2e;">€</div>
<div style="left:348px;top:337.47px;height:20px;font:7px 'Liberation Sans',sans-serif;line-height:20px;color:#1f1f2e;">-</div>
<div style="left:360.5px;top:337.97px;height:20px;font:bold 7px 'Liberation Sans',sans-serif;line-height:20px;color:#1f1f2e;">€</div>
<div style="left:411px;top:337.47px;height:20px;font:7px 'Liberation Sans',sans-serif;line-height:20px;color:#1f1f2e;">-</div>
<div style="left:423.5px;top:337.97px;height:20px;font:bold 7px 'Liberation Sans',sans-serif;line-height:20px;color:#1f1f2e;">€</div>
<div style="left:282px;top:369.47px;height:20px;font:7px 'Liberation Sans',sans-serif;line-height:20px;color:#1f1f2e;">-</div>
<div style="left:294.5px;top:369.97px;height:20px;font:bold 7px 'Liberation Sans',sans-serif;line-height:20px;color:#1f1f2e;">€</div>
<div style="left:348px;top:369.47px;height:20px;font:7px 'Liberation Sans',sans-serif;line-height:20px;color:#1f1f2e;">-</div>
<div style="left:360.5px;top:369.97px;height:20px;font:bold 7px 'Liberation Sans',sans-serif;line-height:20px;color:#1f1f2e;">€</div>
<div style="left:411px;top:369.47px;height:20px;font:7px 'Liberation Sans',sans-serif;line-height:20px;color:#1f1f2e;">-</div>
<div style="left:423.5px;top:369.97px;height:20px;font:bold 7px 'Liberation Sans',sans-serif;line-height:20px;color:#1f1f2e;">€</div>
<div style="left:282px;top:380.47px;height:20px;font:7px 'Liberation Sans',sans-serif;line-height:20px;color:#1f1f2e;">-</div>
<div style="left:294.5px;top:380.97px;height:20px;font:bold 7px 'Liberation Sans',sans-serif;line-height:20px;color:#1f1f2e;">€</div>
<div style="left:348px;top:380.47px;height:20px;font:7px 'Liberation Sans',sans-serif;line-height:20px;color:#1f1f2e;">-</div>
<div style="left:360.5px;top:380.97px;height:20px;font:bold 7px 'Liberation Sans',sans-serif;line-height:20px;color:#1f1f2e;">€</div>
<div style="left:411px;top:380.47px;height:20px;font:7px 'Liberation Sans',sans-serif;line-height:20px;color:#1f1f2e;">-</div>
<div style="left:423.5px;top:380.97px;height:20px;font:bold 7px 'Liberation Sans',sans-serif;line-height:20px;color:#1f1f2e;">€</div>
<div style="left:282px;top:393.47px;height:20px;font:7px 'Liberation Sans',sans-serif;line-height:20px;color:#1f1f2e;">-</div>
<div style="left:294.5px;top:393.97px;height:20px;font:bold 7px 'Liberation Sans',sans-serif;line-height:20px;color:#1f1f2e;">€</div>
<div style="left:348px;top:393.47px;height:20px;font:7px 'Liberation Sans',sans-serif;line-height:20px;color:#1f1f2e;">-</div>
<div style="left:360.5px;top:393.97px;height:20px;font:bold 7px 'Liberation Sans',sans-serif;line-height:20px;color:#1f1f2e;">€</div>
<div style="left:411px;top:393.47px;height:20px;font:7px 'Liberation Sans',sans-serif;line-height:20px;color:#1f1f2e;">-</div>
<div style="left:423.5px;top:393.97px;height:20px;font:bold 7px 'Liberation Sans',sans-serif;line-height:20px;color:#1f1f2e;">€</div>
<div style="left:282px;top:404.47px;height:20px;font:7px 'Liberation Sans',sans-serif;line-height:20px;color:#1f1f2e;">-</div>
<div style="left:294.5px;top:404.97px;height:20px;font:bold 7px 'Liberation Sans',sans-serif;line-height:20px;color:#1f1f2e;">€</div>
<div style="left:348px;top:404.47px;height:20px;font:7px 'Liberation Sans',sans-serif;line-height:20px;color:#1f1f2e;">-</div>
<div style="left:360.5px;top:404.97px;height:20px;font:bold 7px 'Liberation Sans',sans-serif;line-height:20px;color:#1f1f2e;">€</div>
<div style="left:411px;top:404.47px;height:20px;font:7px 'Liberation Sans',sans-serif;line-height:20px;color:#1f1f2e;">-</div>
<div style="left:423.5px;top:404.97px;height:20px;font:bold 7px 'Liberation Sans',sans-serif;line-height:20px;color:#1f1f2e;">€</div>
<div style="left:282px;top:414.47px;height:20px;font:7px 'Liberation Sans',sans-serif;line-height:20px;color:#1f1f2e;">-</div>
<div style="left:294.5px;top:414.97px;height:20px;font:bold 7px 'Liberation Sans',sans-serif;line-height:20px;color:#1f1f2e;">€</div>
<div style="left:348px;top:414.47px;height:20px;font:7px 'Liberation Sans',sans-serif;line-height:20px;color:#1f1f2e;">-</div>
<div style="left:360.5px;top:414.97px;height:20px;font:bold 7px 'Liberation Sans',sans-serif;line-height:20px;color:#1f1f2e;">€</div>
<div style="left:411px;top:414.47px;height:20px;font:7px 'Liberation Sans',sans-serif;line-height:20px;color:#1f1f2e;">-</div>
<div style="left:423.5px;top:414.97px;height:20px;font:bold 7px 'Liberation Sans',sans-serif;line-height:20px;color:#1f1f2e;">€</div>
<div style="left:282px;top:473.47px;height:20px;font:7px 'Liberation Sans',sans-serif;line-height:20px;color:#1f1f2e;">-</div>
<div style="left:294.5px;top:473.97px;height:20px;font:bold 7px 'Liberation Sans',sans-serif;line-height:20px;color:#1f1f2e;">€</div>
<div style="left:348px;top:473.47px;height:20px;font:7px 'Liberation Sans',sans-serif;line-height:20px;color:#1f1f2e;">-</div>
<div style="left:360.5px;top:473.97px;height:20px;font:bold 7px 'Liberation Sans',sans-serif;line-height:20px;color:#1f1f2e;">€</div>
<div style="left:411px;top:473.47px;height:20px;font:7px 'Liberation Sans',sans-serif;line-height:20px;color:#1f1f2e;">-</div>
<div style="left:423.5px;top:473.97px;height:20px;font:bold 7px 'Liberation Sans',sans-serif;line-height:20px;color:#1f1f2e;">€</div>
<div style="left:282px;top:483.47px;height:20px;font:7px 'Liberation Sans',sans-serif;line-height:20px;color:#1f1f2e;">-</div>
<div style="left:294.5px;top:483.97px;height:20px;font:bold 7px 'Liberation Sans',sans-serif;line-height:20px;color:#1f1f2e;">€</div>
<div style="left:348px;top:483.47px;height:20px;font:7px 'Liberation Sans',sans-serif;line-height:20px;color:#1f1f2e;">-</div>
<div style="left:360.5px;top:483.97px;height:20px;font:bold 7px 'Liberation Sans',sans-serif;line-height:20px;color:#1f1f2e;">€</div>
<div style="left:411px;top:483.47px;height:20px;font:7px 'Liberation Sans',sans-serif;line-height:20px;color:#1f1f2e;">-</div>
<div style="left:423.5px;top:483.97px;height:20px;font:bold 7px 'Liberation Sans',sans-serif;line-height:20px;color:#1f1f2e;">€</div>
<div style="left:282px;top:494.47px;height:20px;font:7px 'Liberation Sans',sans-serif;line-height:20px;color:#1f1f2e;">-</div>
<div style="left:294.5px;top:494.97px;height:20px;font:bold 7px 'Liberation Sans',sans-serif;line-height:20px;color:#1f1f2e;">€</div>
<div style="left:348px;top:494.47px;height:20px;font:7px 'Liberation Sans',sans-serif;line-height:20px;color:#1f1f2e;">-</div>
<div style="left:360.5px;top:494.97px;height:20px;font:bold 7px 'Liberation Sans',sans-serif;line-height:20px;color:#1f1f2e;">€</div>
<div style="left:411px;top:494.47px;height:20px;font:7px 'Liberation Sans',sans-serif;line-height:20px;color:#1f1f2e;">-</div>
<div style="left:423.5px;top:494.97px;height:20px;font:bold 7px 'Liberation Sans',sans-serif;line-height:20px;color:#1f1f2e;">€</div>
<div style="left:282px;top:505.47px;height:20px;font:7px 'Liberation Sans',sans-serif;line-height:20px;color:#1f1f2e;">-</div>
<div style="left:294.5px;top:505.97px;height:20px;font:bold 7px 'Liberation Sans',sans-serif;line-height:20px;color:#1f1f2e;">€</div>
<div style="left:348px;top:505.47px;height:20px;font:7px 'Liberation Sans',sans-serif;line-height:20px;color:#1f1f2e;">-</div>
<div style="left:360.5px;top:505.97px;height:20px;font:bold 7px 'Liberation Sans',sans-serif;line-height:20px;color:#1f1f2e;">€</div>
<div style="left:411px;top:505.47px;height:20px;font:7px 'Liberation Sans',sans-serif;line-height:20px;color:#1f1f2e;">-</div>
<div style="left:423.5px;top:505.97px;height:20px;font:bold 7px 'Liberation Sans',sans-serif;line-height:20px;color:#1f1f2e;">€</div>
<div style="left:282px;top:558.47px;height:20px;font:7px 'Liberation Sans',sans-serif;line-height:20px;color:#1f1f2e;">-</div>
<div style="left:294.5px;top:558.97px;height:20px;font:bold 7px 'Liberation Sans',sans-serif;line-height:20px;color:#1f1f2e;">€</div>
<div style="left:348px;top:558.47px;height:20px;font:7px 'Liberation Sans',sans-serif;line-height:20px;color:#1f1f2e;">-</div>
<div style="left:360.5px;top:558.97px;height:20px;font:bold 7px 'Liberation Sans',sans-serif;line-height:20px;color:#1f1f2e;">€</div>
<div style="left:411px;top:558.47px;height:20px;font:7px 'Liberation Sans',sans-serif;line-height:20px;color:#1f1f2e;">-</div>
<div style="left:423.5px;top:558.97px;height:20px;font:bold 7px 'Liberation Sans',sans-serif;line-height:20px;color:#1f1f2e;">€</div>
<div style="left:282px;top:569.47px;height:20px;font:7px 'Liberation Sans',sans-serif;line-height:20px;color:#1f1f2e;">-</div>
<div style="left:294.5px;top:569.97px;height:20px;font:bold 7px 'Liberation Sans',sans-serif;line-height:20px;color:#1f1f2e;">€</div>
<div style="left:348px;top:569.47px;height:20px;font:7px 'Liberation Sans',sans-serif;line-height:20px;color:#1f1f2e;">-</div>
<div style="left:360.5px;top:569.97px;height:20px;font:bold 7px 'Liberation Sans',sans-serif;line-height:20px;color:#1f1f2e;">€</div>
<div style="left:411px;top:569.47px;height:20px;font:7px 'Liberation Sans',sans-serif;line-height:20px;color:#1f1f2e;">-</div>
<div style="left:423.5px;top:569.97px;height:20px;font:bold 7px 'Liberation Sans',sans-serif;line-height:20px;color:#1f1f2e;">€</div>
<div style="left:282px;top:580.47px;height:20px;font:7px 'Liberation Sans',sans-serif;line-height:20px;color:#1f1f2e;">-</div>
<div style="left:294.5px;top:580.97px;height:20px;font:bold 7px 'Liberation Sans',sans-serif;line-height:20px;color:#1f1f2e;">€</div>
<div style="left:348px;top:580.47px;height:20px;font:7px 'Liberation Sans',sans-serif;line-height:20px;color:#1f1f2e;">-</div>
<div style="left:360.5px;top:580.97px;height:20px;font:bold 7px 'Liberation Sans',sans-serif;line-height:20px;color:#1f1f2e;">€</div>
<div style="left:411px;top:580.47px;height:20px;font:7px 'Liberation Sans',sans-serif;line-height:20px;color:#1f1f2e;">-</div>
<div style="left:423.5px;top:580.97px;height:20px;font:bold 7px 'Liberation Sans',sans-serif;line-height:20px;color:#1f1f2e;">€</div>
<div style="left:282px;top:526.47px;height:20px;font:7px 'Liberation Sans',sans-serif;line-height:20px;color:#1f1f2e;">-</div>
<div style="left:294.5px;top:526.97px;height:20px;font:bold 7px 'Liberation Sans',sans-serif;line-height:20px;color:#1f1f2e;">€</div>
<div style="left:348px;top:526.47px;height:20px;font:7px 'Liberation Sans',sans-serif;line-height:20px;color:#1f1f2e;">-</div>
<div style="left:360.5px;top:526.97px;height:20px;font:bold 7px 'Liberation Sans',sans-serif;line-height:20px;color:#1f1f2e;">€</div>
<div style="left:244px;top:440px;width:188px;height:14px;background:#948a54;"></div>
<div style="left:244px;top:440px;width:188px;height:1px;background:#474747;"></div>
<div style="left:244px;top:453px;width:188px;height:1px;background:#474747;"></div>
<div style="left:259.0px;top:439.37px;height:20px;font:bold 7.0px 'Liberation Sans',sans-serif;line-height:20px;color:#ffff99;transform:scaleX(1.2301);transform-origin:0 0;">2 000,00 €</div>
<div style="left:325.0px;top:439.37px;height:20px;font:bold 7.0px 'Liberation Sans',sans-serif;line-height:20px;color:#ffff99;transform:scaleX(1.2301);transform-origin:0 0;">2 000,00 €</div>
<div style="left:388.0px;top:439.37px;height:20px;font:bold 7.0px 'Liberation Sans',sans-serif;line-height:20px;color:#ffff99;transform:scaleX(1.2301);transform-origin:0 0;">2 000,00 €</div>
<div style="left:303px;top:189px;width:68px;height:12px;border:2px solid #000;box-sizing:border-box;"></div>
<div style="left:367px;top:198px;width:6px;height:6px;background:#fff;"></div>
<div style="left:368px;top:199px;width:4px;height:4px;background:#000;"></div>
<div style="left:752.0px;top:175.29px;height:20px;font:6.1px 'Liberation Sans',sans-serif;line-height:20px;color:#1f1f2e;transform:scaleX(1.2335);transform-origin:0 0;">10 000,00 €</div>
<div style="left:774px;top:185.47px;height:20px;font:7px 'Liberation Sans',sans-serif;line-height:20px;color:#1f1f2e;">-</div>
<div style="left:786.5px;top:185.97px;height:20px;font:bold 7px 'Liberation Sans',sans-serif;line-height:20px;color:#1f1f2e;">€</div>
<div style="left:774px;top:195.47px;height:20px;font:7px 'Liberation Sans',sans-serif;line-height:20px;color:#1f1f2e;">-</div>
<div style="left:786.5px;top:195.97px;height:20px;font:bold 7px 'Liberation Sans',sans-serif;line-height:20px;color:#1f1f2e;">€</div>
<div style="left:774px;top:227.47px;height:20px;font:7px 'Liberation Sans',sans-serif;line-height:20px;color:#1f1f2e;">-</div>
<div style="left:786.5px;top:227.97px;height:20px;font:bold 7px 'Liberation Sans',sans-serif;line-height:20px;color:#1f1f2e;">€</div>
<div style="left:774px;top:238.47px;height:20px;font:7px 'Liberation Sans',sans-serif;line-height:20px;color:#1f1f2e;">-</div>
<div style="left:786.5px;top:238.97px;height:20px;font:bold 7px 'Liberation Sans',sans-serif;line-height:20px;color:#1f1f2e;">€</div>
<div style="left:774px;top:249.47px;height:20px;font:7px 'Liberation Sans',sans-serif;line-height:20px;color:#1f1f2e;">-</div>
<div style="left:786.5px;top:249.97px;height:20px;font:bold 7px 'Liberation Sans',sans-serif;line-height:20px;color:#1f1f2e;">€</div>
<div style="left:774px;top:259.47px;height:20px;font:7px 'Liberation Sans',sans-serif;line-height:20px;color:#1f1f2e;">-</div>
<div style="left:786.5px;top:259.97px;height:20px;font:bold 7px 'Liberation Sans',sans-serif;line-height:20px;color:#1f1f2e;">€</div>
<div style="left:774px;top:280.47px;height:20px;font:7px 'Liberation Sans',sans-serif;line-height:20px;color:#1f1f2e;">-</div>
<div style="left:786.5px;top:280.97px;height:20px;font:bold 7px 'Liberation Sans',sans-serif;line-height:20px;color:#1f1f2e;">€</div>
<div style="left:774px;top:291.47px;height:20px;font:7px 'Liberation Sans',sans-serif;line-height:20px;color:#1f1f2e;">-</div>
<div style="left:786.5px;top:291.97px;height:20px;font:bold 7px 'Liberation Sans',sans-serif;line-height:20px;color:#1f1f2e;">€</div>
<div style="left:774px;top:302.47px;height:20px;font:7px 'Liberation Sans',sans-serif;line-height:20px;color:#1f1f2e;">-</div>
<div style="left:786.5px;top:302.97px;height:20px;font:bold 7px 'Liberation Sans',sans-serif;line-height:20px;color:#1f1f2e;">€</div>
<div style="left:774px;top:312.47px;height:20px;font:7px 'Liberation Sans',sans-serif;line-height:20px;color:#1f1f2e;">-</div>
<div style="left:786.5px;top:312.97px;height:20px;font:bold 7px 'Liberation Sans',sans-serif;line-height:20px;color:#1f1f2e;">€</div>
<div style="left:774px;top:358.47px;height:20px;font:7px 'Liberation Sans',sans-serif;line-height:20px;color:#1f1f2e;">-</div>
<div style="left:786.5px;top:358.97px;height:20px;font:bold 7px 'Liberation Sans',sans-serif;line-height:20px;color:#1f1f2e;">€</div>
<div style="left:774px;top:369.47px;height:20px;font:7px 'Liberation Sans',sans-serif;line-height:20px;color:#1f1f2e;">-</div>
<div style="left:786.5px;top:369.97px;height:20px;font:bold 7px 'Liberation Sans',sans-serif;line-height:20px;color:#1f1f2e;">€</div>
<div style="left:774px;top:414.47px;height:20px;font:7px 'Liberation Sans',sans-serif;line-height:20px;color:#1f1f2e;">-</div>
<div style="left:786.5px;top:414.97px;height:20px;font:bold 7px 'Liberation Sans',sans-serif;line-height:20px;color:#1f1f2e;">€</div>
<div style="left:774px;top:425.47px;height:20px;font:7px 'Liberation Sans',sans-serif;line-height:20px;color:#1f1f2e;">-</div>
<div style="left:786.5px;top:425.97px;height:20px;font:bold 7px 'Liberation Sans',sans-serif;line-height:20px;color:#1f1f2e;">€</div>
<div style="left:774px;top:473.47px;height:20px;font:7px 'Liberation Sans',sans-serif;line-height:20px;color:#1f1f2e;">-</div>
<div style="left:786.5px;top:473.97px;height:20px;font:bold 7px 'Liberation Sans',sans-serif;line-height:20px;color:#1f1f2e;">€</div>
<div style="left:774px;top:483.47px;height:20px;font:7px 'Liberation Sans',sans-serif;line-height:20px;color:#1f1f2e;">-</div>
<div style="left:786.5px;top:483.97px;height:20px;font:bold 7px 'Liberation Sans',sans-serif;line-height:20px;color:#1f1f2e;">€</div>
<div style="left:774px;top:494.47px;height:20px;font:7px 'Liberation Sans',sans-serif;line-height:20px;color:#1f1f2e;">-</div>
<div style="left:786.5px;top:494.97px;height:20px;font:bold 7px 'Liberation Sans',sans-serif;line-height:20px;color:#1f1f2e;">€</div>
<div style="left:774px;top:505.47px;height:20px;font:7px 'Liberation Sans',sans-serif;line-height:20px;color:#1f1f2e;">-</div>
<div style="left:786.5px;top:505.97px;height:20px;font:bold 7px 'Liberation Sans',sans-serif;line-height:20px;color:#1f1f2e;">€</div>
<div style="left:774px;top:515.47px;height:20px;font:7px 'Liberation Sans',sans-serif;line-height:20px;color:#1f1f2e;">-</div>
<div style="left:786.5px;top:515.97px;height:20px;font:bold 7px 'Liberation Sans',sans-serif;line-height:20px;color:#1f1f2e;">€</div>
<div style="left:774px;top:526.47px;height:20px;font:7px 'Liberation Sans',sans-serif;line-height:20px;color:#1f1f2e;">-</div>
<div style="left:786.5px;top:526.97px;height:20px;font:bold 7px 'Liberation Sans',sans-serif;line-height:20px;color:#1f1f2e;">€</div>
<div style="left:774px;top:537.47px;height:20px;font:7px 'Liberation Sans',sans-serif;line-height:20px;color:#1f1f2e;">-</div>
<div style="left:786.5px;top:537.97px;height:20px;font:bold 7px 'Liberation Sans',sans-serif;line-height:20px;color:#1f1f2e;">€</div>
<div style="left:774px;top:547.47px;height:20px;font:7px 'Liberation Sans',sans-serif;line-height:20px;color:#1f1f2e;">-</div>
<div style="left:786.5px;top:547.97px;height:20px;font:bold 7px 'Liberation Sans',sans-serif;line-height:20px;color:#1f1f2e;">€</div>
<div style="left:774px;top:569.47px;height:20px;font:7px 'Liberation Sans',sans-serif;line-height:20px;color:#1f1f2e;">-</div>
<div style="left:786.5px;top:569.97px;height:20px;font:bold 7px 'Liberation Sans',sans-serif;line-height:20px;color:#1f1f2e;">€</div>
<div style="left:701px;top:339px;width:94px;height:14px;background:#948a54;"></div>
<div style="left:701px;top:339px;width:94px;height:1px;background:#474747;"></div>
<div style="left:701px;top:352px;width:94px;height:1px;background:#474747;"></div>
<div style="left:745.5px;top:337.37px;height:20px;font:bold 7.0px 'Liberation Sans',sans-serif;line-height:20px;color:#ffff99;transform:scaleX(1.2439);transform-origin:0 0;">10 000,00 €</div>
<div style="left:701px;top:395px;width:94px;height:14px;background:#948a54;"></div>
<div style="left:701px;top:395px;width:94px;height:1px;background:#474747;"></div>
<div style="left:701px;top:408px;width:94px;height:1px;background:#474747;"></div>
<div style="left:774px;top:392.87px;height:20px;font:bold 7px 'Liberation Sans',sans-serif;line-height:20px;color:#ffff99;">-</div>
<div style="left:786.5px;top:393.10px;height:20px;font:bold 7.8px 'Liberation Sans',sans-serif;line-height:20px;color:#ffff99;">€</div>
<div style="left:701px;top:454px;width:94px;height:14px;background:#948a54;"></div>
<div style="left:701px;top:454px;width:94px;height:1px;background:#474747;"></div>
<div style="left:701px;top:467px;width:94px;height:1px;background:#474747;"></div>
<div style="left:774px;top:451.87px;height:20px;font:bold 7px 'Liberation Sans',sans-serif;line-height:20px;color:#ffff99;">-</div>
<div style="left:786.5px;top:452.10px;height:20px;font:bold 7.8px 'Liberation Sans',sans-serif;line-height:20px;color:#ffff99;">€</div>
</body></html>
